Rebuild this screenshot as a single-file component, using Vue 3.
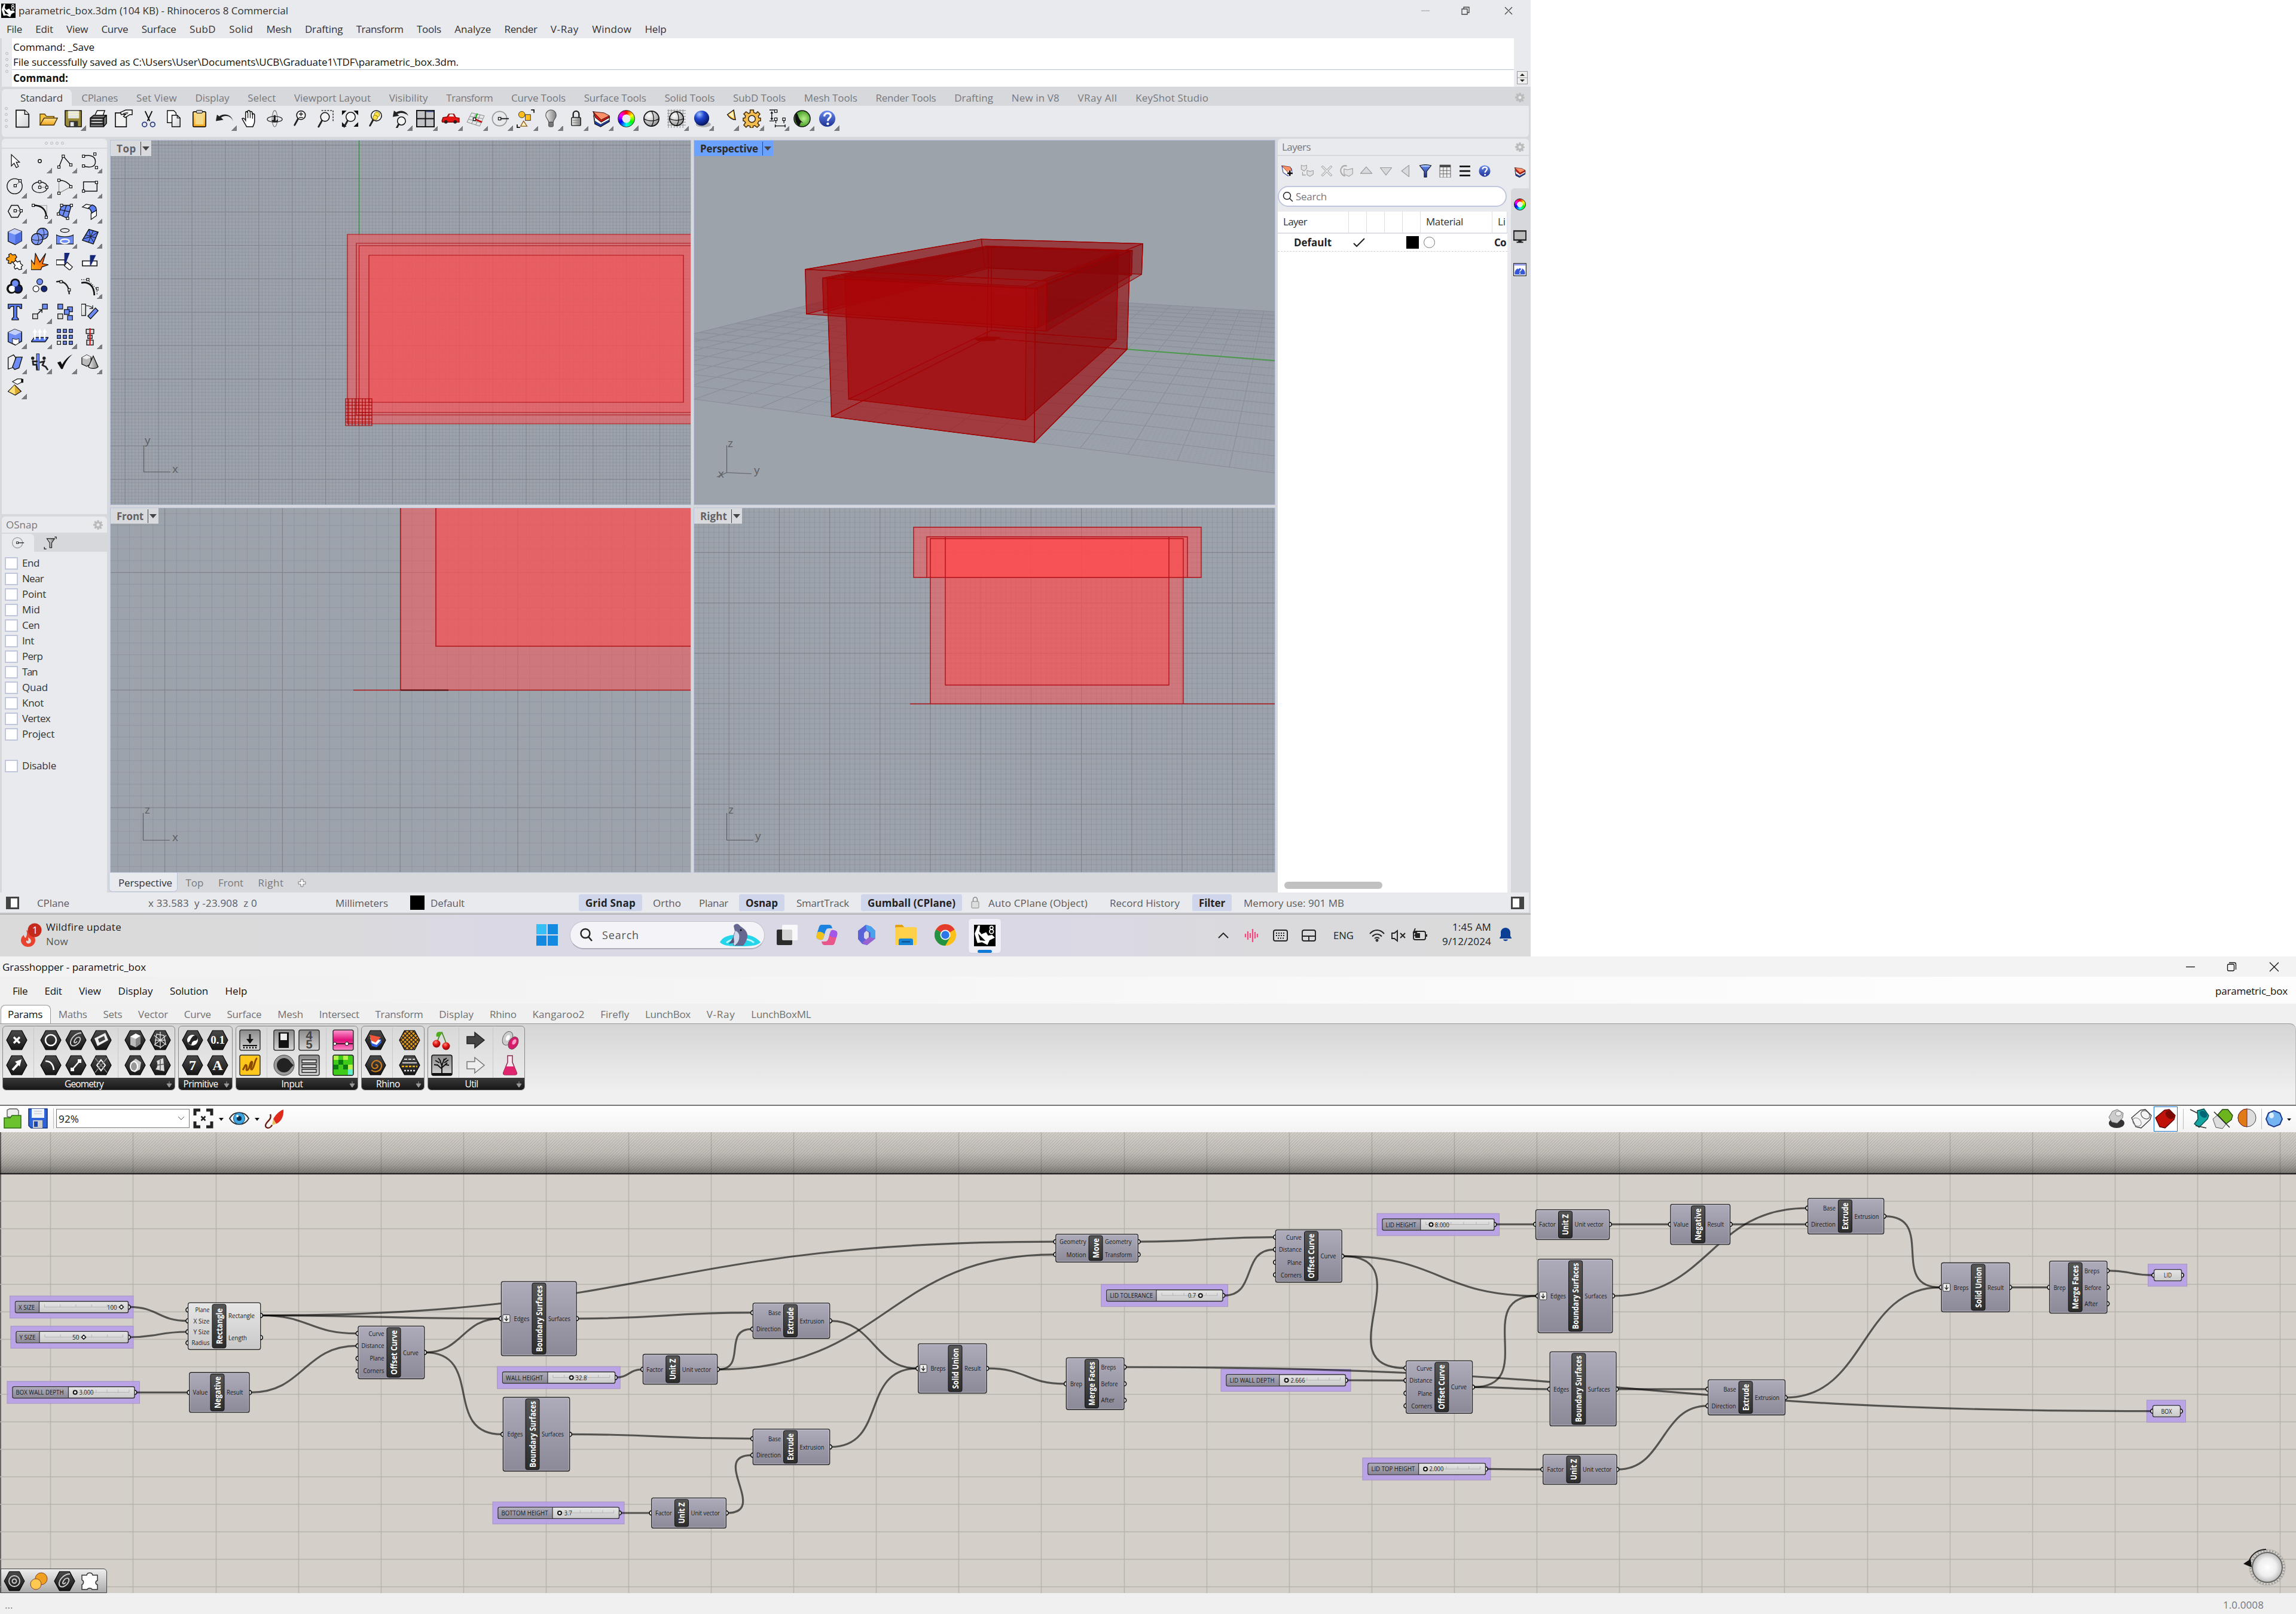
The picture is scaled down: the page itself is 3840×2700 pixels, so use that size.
<script setup>
const vFit = {
  mounted(el, { value }) {
    const n = el.textContent.length
    const w = el.getBoundingClientRect().width
    el.style.letterSpacing = (value - w) / n + 'px'
  },
}

const rhinoMenu = [['File', 26], ['Edit', 29.5], ['View', 36], ['Curve', 45], ['Surface', 58], ['SubD', 44], ['Solid', 40], ['Mesh', 42], ['Drafting', 63.5], ['Transform', 79], ['Tools', 41], ['Analyze', 61], ['Render', 55], ['V-Ray', 47], ['Window', 66], ['Help', 36]]
const rhinoTabs = [['CPlanes', 61], ['Set View', 68], ['Display', 57], ['Select', 47], ['Viewport Layout', 128], ['Visibility', 65], ['Transform', 78], ['Curve Tools', 91], ['Surface Tools', 104], ['Solid Tools', 84], ['SubD Tools', 88], ['Mesh Tools', 89], ['Render Tools', 101], ['Drafting', 65], ['New in V8', 80], ['VRay All', 66], ['KeyShot Studio', 122]]
const ghMenu = [['File', 25], ['Edit', 29], ['View', 37], ['Display', 58], ['Solution', 64], ['Help', 37]]
const ghTabs = [['Maths', 48], ['Sets', 32], ['Vector', 50], ['Curve', 45], ['Surface', 58], ['Mesh', 43], ['Intersect', 67], ['Transform', 80], ['Display', 58], ['Rhino', 45], ['Kangaroo2', 87], ['Firefly', 48], ['LunchBox', 76], ['V-Ray', 48], ['LunchBoxML', 100]]
const snaps = [['End', 29], ['Near', 36], ['Point', 40], ['Mid', 30], ['Cen', 29], ['Int', 20], ['Perp', 34], ['Tan', 25], ['Quad', 43], ['Knot', 36], ['Vertex', 47], ['Project', 54]]

const sq = (x, y, f = '#fff') => `<rect x="${x - 2.2}" y="${y - 2.2}" width="4.4" height="4.4" fill="${f}" stroke="#111" stroke-width="1.3"/>`
const lens = (x, y, r = 7.5) => `<path d="M${x - 5} ${y + 6}L${x - 11} ${y + 17}" stroke="#222" stroke-width="3" stroke-linecap="round"/><circle cx="${x}" cy="${y}" r="${r}" fill="#f4f4f4" stroke="#111" stroke-width="1.6"/>`
const ic = {
  newdoc: '<path d="M3 1.5h15l7 7v22H3z" fill="url(#gWhite)" stroke="#111" stroke-width="1.8"/><path d="M18 1.5v7h7" fill="#fff" stroke="#111" stroke-width="1.5"/>',
  open: '<path d="M1 27V8h8l3 4h13v5" fill="#f6c343" stroke="#5b4310" stroke-width="1.5"/><path d="M1 27l7-12h23l-6 12z" fill="url(#gGold)" stroke="#4a3508" stroke-width="1.5"/>',
  save: '<path d="M1 2h28v28H4l-3-3z" fill="#9a8b3c" stroke="#111" stroke-width="1.6"/><rect x="6" y="2.5" width="19" height="13" fill="#e4e4e0"/><path d="M6 5h19M6 9h19" stroke="#f4f4c8" stroke-width="1.5"/><rect x="8" y="20" width="15" height="10" fill="#333"/><rect x="10" y="22" width="6" height="7" fill="#e8e8e8"/>',
  print: '<path d="M8 12L13 2h13l-4 11" fill="#fff" stroke="#111" stroke-width="1.5"/><path d="M1 15l6-5h22v14l-5 6H1z" fill="#777" stroke="#111" stroke-width="1.6"/><path d="M1 15h23v15M24 15l5-5M1 20h23M1 25h23" fill="none" stroke="#111" stroke-width="2"/><path d="M4 17.500h17M4 22.500h17" stroke="#ddd" stroke-width="1.5"/>',
  props: '<path d="M1 6h19v24H1z" fill="#f2f2f2" stroke="#111" stroke-width="1.700"/><path d="M10 5l9-4h11v8h-4l-8 5-3-2 4-4-8 1z" fill="#fff" stroke="#111" stroke-width="1.500"/><path d="M14 7l9-2M15 9l8-2" stroke="#111"/>',
  cut: '<path d="M9 3l8 17M21 3l-8 17" stroke="#111" stroke-width="2"/><circle cx="8" cy="26" r="4" fill="none" stroke="#2e3c86" stroke-width="1.800"/><circle cx="22" cy="26" r="4" fill="none" stroke="#2e3c86" stroke-width="1.800"/>',
  copy: '<path d="M4 2h11l4 4v17H4z" fill="#fff" stroke="#111" stroke-width="1.500"/><path d="M12 10h9l5 5v15H12z" fill="url(#gWhite)" stroke="#111" stroke-width="1.500"/><path d="M21 10v5h5" fill="none" stroke="#111" stroke-width="1.200"/>',
  paste: '<rect x="5" y="4" width="22" height="26" rx="2" fill="url(#gGold)" stroke="#111" stroke-width="1.700"/><rect x="9" y="8" width="14" height="18" fill="#f3d98c"/><rect x="11" y="1.500" width="10" height="5" rx="1" fill="#ccc" stroke="#111"/>',
  undo: '<path d="M31 22C29 11 17 9 10 14l4 4L1 20 3 9l4 3C15 6 29 8 31 22z" fill="#222"/>',
  hand: '<path d="M11 30C8 25 5 20 3 16c2-2 4 0 6 3V6c0-3 3-3 3.500 0V4c0-3 4-3 4 0v1c0-2 4-2 4 1v3c0-2 4-2 4 1v11c0 4-2 6-3 9z" fill="#fff" stroke="#111" stroke-width="1.600"/><path d="M13 6v9M17 5v10M21 8v8" stroke="#111" stroke-width="1.300"/>',
  rotate: '<ellipse cx="16" cy="16" rx="4.500" ry="14" fill="none" stroke="#777" stroke-width="1.200"/><ellipse cx="16" cy="17" rx="13" ry="5" fill="none" stroke="#333" stroke-width="1.400"/><path d="M14 10h3.500v10l4-3v5H13l-3-3 4-1z" fill="#222"/>',
  zoom: lens(18, 10) + '<path d="M14.500 8h7M18 4.500v7M14.500 14h7" stroke="#111" stroke-width="1.300"/>',
  zoomwin: '<path d="M10 2h20v20" fill="none" stroke="#111" stroke-dasharray="3 2" stroke-width="1.400"/>' + lens(16, 13),
  zoomext: '<path d="M2 2h8l-8 8zM30 2h-8l8 8zM2 30h8l-8-8zM30 30h-8l8-8z" fill="#111"/>' + lens(17, 13, 8),
  zoomsel: lens(18, 11, 9) + '<circle cx="19" cy="9" r="4.500" fill="#ffe14a" stroke="#8a7400"/><circle cx="16" cy="14" r="4" fill="#ffe14a" stroke="#8a7400"/>',
  undoview: lens(18, 20, 7) + '<path d="M30 11C26 1 14 1 9 5L5 2 3 13l11-2-3-3c6-3 13-2 19 3z" fill="#222"/>',
  fourview: '<rect x="1" y="2" width="30" height="28" fill="#c2c3c6" stroke="#111" stroke-width="2"/><path d="M16 2v28M1 16h30" stroke="#111" stroke-width="2"/><path d="M17 3.500h13" stroke="#2a3c70" stroke-width="2"/>',
  car: '<path d="M1 20l2-6 7-1 3-5h9l3 6 6 1v7H2z" fill="#e51616" stroke="#700" stroke-width="1.200"/><path d="M13 12l2-3.500h5l2 4z" fill="#dff"/><circle cx="8" cy="21.500" r="3" fill="#222"/><circle cx="24" cy="21.500" r="3" fill="#222"/>',
  cplane: '<path d="M9 6l22 5-8 18L1 22zM6 12l22 4M4 17l21 6M16 8L9 25M24 9l-8 18" fill="#e6e7ea" stroke="#888" stroke-width="1"/><path d="M15 17l12 5" stroke="#c00" stroke-width="2.500"/><path d="M15 17l4-10" stroke="#0a0" stroke-width="2"/>' + sq(14, 17),
  osnap: '<circle cx="14" cy="16" r="12.500" fill="none" stroke="#999" stroke-width="1.800"/><path d="M14 16h16" stroke="#111" stroke-width="1.800"/>' + sq(14, 16),
  shapes: '<circle cx="9" cy="9" r="5.500" fill="#ffbe1e" stroke="#333"/><rect x="15" y="9" width="9" height="10" fill="#ffbe1e" stroke="#333"/><path d="M12 20l6 9H7z" fill="#fff0c8" stroke="#8a5a10" stroke-width="1.300"/><path d="M25 1h5v5M1 26v5h5" fill="none" stroke="#111" stroke-width="1.800"/>',
  lamp: '<path d="M12 22c0-5-5-6-5-12a9 9 0 0 1 18 0c0 6-5 7-5 12z" fill="url(#gGrey)" stroke="#555" stroke-width="1.300"/><rect x="12" y="22" width="8" height="8" rx="2" fill="#777" stroke="#444"/>',
  lock: '<path d="M11 15V8a5 5 0 0 1 10 0v7" fill="none" stroke="#222" stroke-width="2.400"/><rect x="8" y="14" width="16" height="14" rx="2" fill="url(#gGrey)" stroke="#222" stroke-width="1.500"/><path d="M10 19h12M10 23h12" stroke="#888"/>',
  layers: '<path d="M3 11l2 14 10 5 15-9v-8z" fill="#1e3fb0" stroke="#111" stroke-width="1.300"/><path d="M3 8l2 12 10 6 15-8v-6z" fill="#fff" stroke="#334" stroke-width="1"/><path d="M2 4l4 10 10 8 14-8v-3z" fill="#d01a10" stroke="#311" stroke-width="1.100"/><path d="M2 4l19 2 9 5-14 7z" fill="#ff8f66" stroke="#411" stroke-width="1"/>',
  sphere: '<circle cx="16" cy="16" r="13" fill="url(#gSphere)" stroke="#111" stroke-width="1.800"/><path d="M16 3c5 7 5 19 0 26M3 16c7 5 19 5 26 0" fill="none" stroke="#111" stroke-width="1.300"/>',
  spheregrid: '<path d="M2 0v32M7 0v32M12 0v32M17 0v32M22 0v32M27 0v32M0 2h32M0 7h32M0 12h32M0 17h32M0 22h32M0 27h32" stroke="#888" stroke-width="1"/><circle cx="16" cy="16" r="12" fill="url(#gSphere)" stroke="#111" stroke-width="1.800"/><path d="M16 4c5 7 5 17 0 24M4 16c7 4 17 4 24 0" fill="none" stroke="#111" stroke-width="1.300"/>',
  bluesphere: '<ellipse cx="19" cy="26" rx="13" ry="5" fill="#777" opacity=".5"/><circle cx="16" cy="15" r="13" fill="url(#gBlueBall)"/>',
  spot: '<path d="M17 9L28 1l3 17c-5 0-11-4-14-9z" fill="#ffb020" stroke="#111" stroke-width="1.400"/><path d="M27 3l1 13-9-7z" fill="#fff2c0"/>',
  gear: '<path d="M13 1h6v4l4 2 3-3 4 4-3 4 1 3h3v5h-3l-2 4 3 3-4 4-4-3-3 1v3h-5v-3l-4-1-3 3-4-4 3-4-2-3H1v-5h3l1-4-3-3 4-4 4 3 3-1z" fill="#f4bd52" stroke="#3a2503" stroke-width="1.500"/><circle cx="16" cy="16.500" r="6" fill="#e9eaee" stroke="#3a2503" stroke-width="1.500"/>',
  dim: '<path d="M7 5v12M3 1h8M3 20h8M13 26v5M30 26v5M13 28.500h17" stroke="#111" stroke-width="1.500"/><path d="M4.500 7L7 3l2.500 4M4.500 15L7 19l2.500-4" fill="#111"/><path d="M14 18v6M28 18v6" stroke="#111" stroke-width="1.400" fill="none"/>' + sq(14, 3) + sq(14, 17) + sq(28, 17),
  green: '<circle cx="16" cy="16" r="14" fill="url(#gGreenBall)" stroke="#111" stroke-width="1.500"/><path d="M6 6C2 14 4 24 11 29l3-7 4 1C9 18 10 9 6 6z" fill="#111"/>',
  help: '<circle cx="16" cy="16" r="14" fill="url(#gHelp)"/><path d="M11 12c0-7 11-7 11-1 0 4-5 4-5 9" fill="none" stroke="#fff" stroke-width="3.400"/><circle cx="17" cy="25" r="2.200" fill="#fff"/>',
  arrow: '<path d="M10 4v21l5-5 4 8 4-2-4-8h6z" fill="#fff" stroke="#111" stroke-width="1.400"/>',
  point: '<circle cx="16" cy="16" r="3" fill="#fff" stroke="#111" stroke-width="1.600"/>',
  poly: '<path d="M5 27L13 7l14 16" fill="none" stroke="#111" stroke-width="1.600"/>' + sq(5, 27) + sq(13, 7) + sq(27, 23),
  curve: '<path d="M4 7c8-3 22-2 22 10S12 28 4 25" fill="none" stroke="#111" stroke-width="1.600"/>' + sq(4, 7) + sq(25, 3) + sq(4, 25) + sq(28, 28),
  circle: '<circle cx="16" cy="16" r="14" fill="none" stroke="#111" stroke-width="1.500"/><path d="M17 15l9-8" stroke="#777" stroke-width="1.300"/>' + sq(17, 15) + sq(26, 6),
  ellipse: '<ellipse cx="16" cy="18" rx="14" ry="10" fill="none" stroke="#111" stroke-width="1.500"/><path d="M16 18V8M16 18h13" stroke="#777"/>' + sq(16, 18) + sq(16, 8) + sq(29, 18),
  arc: '<path d="M5 5c11 0 19 6 22 12L5 29z" fill="none" stroke="#888" stroke-width="1.200"/><path d="M5 5c11 0 19 6 22 12" fill="none" stroke="#111" stroke-width="1.600"/>' + sq(5, 5) + sq(27, 17) + sq(5, 29),
  rect: '<path d="M4 8h25v17H4z" fill="none" stroke="#111" stroke-width="1.600"/>' + sq(4, 25) + sq(28, 9),
  hex: '<path d="M10 5h12l6 11-6 11H10L4 16z" fill="none" stroke="#111" stroke-width="1.600"/><path d="M17 15h11" stroke="#777"/>' + sq(17, 15) + sq(28, 15),
  fillet: '<path d="M4 5h25v22" fill="none" stroke="#aaa" stroke-width="1.400"/><path d="M4 5c15 0 24 6 24 22" fill="none" stroke="#111" stroke-width="2.600"/>' + sq(4, 5) + sq(28, 27),
  srf: '<path d="M10 5h18l-7 24L4 21z" fill="#6d8cf5" stroke="#111" stroke-width="1.500"/><path d="M19 5l-7 20M7 13l18 4" stroke="#111" stroke-width="1.300"/>' + sq(10, 5) + sq(28, 5) + sq(4, 21) + sq(21, 29),
  bend: '<path d="M2 8l7-5 11 2-7 6z" fill="#fff" stroke="#111" stroke-width="1.400"/><path d="M13 10l7-6c6 2 8 6 8 10l-9 7c0-5-2-9-6-11z" fill="#5b7df2" stroke="#111" stroke-width="1.400"/><path d="M18 20l10-6v10l-10 7z" fill="#fff" stroke="#111" stroke-width="1.400"/>',
  box: '<path d="M4 8l12-6 13 5v17l-12 7-13-6z" fill="#6d8cf5" stroke="#111" stroke-width="1.600"/><path d="M4 8l12-6 13 5-12 6z" fill="#c3d0fb"/><path d="M17 13l12-6v17l-12 7z" fill="#4f70e4"/>',
  spheres: '<circle cx="21" cy="11" r="10.500" fill="#7f9af8" stroke="#111" stroke-width="1.500"/><path d="M21 1c4 6 4 14 0 20M11 11c6 3 14 3 20 0" stroke="#111" fill="none"/><circle cx="11" cy="21" r="10.500" fill="#7f9af8" stroke="#111" stroke-width="1.500"/><path d="M11 11c4 6 4 14 0 20M1 21c6 3 14 3 20 0" stroke="#111" fill="none"/>',
  ring: '<ellipse cx="16" cy="5" rx="8" ry="3.500" fill="none" stroke="#111" stroke-width="1.400"/><path d="M0 13c9 5 23 5 32 0v17H0z" fill="#6d8cf5" stroke="#111" stroke-width="1.500"/><ellipse cx="16" cy="25" rx="8" ry="4" fill="none" stroke="#fff" stroke-width="2.500"/>',
  mesh: '<path d="M14 3l17 5-9 22-20-7z" fill="#5b7df2" stroke="#111" stroke-width="1.600"/><path d="M8 13l19 6M22 5l-9 22M14 3l3 14 14-9M5 20l12-3 6 10" stroke="#111" stroke-width="1.100" fill="none"/>',
  puzzle: '<path d="M1 10l5-3-1-4 4-2 3 3 5-1 3 5-3 3 2 6-5 2-3-3-2 4-5-1 1-5-4-1z" fill="#ff9d0a" stroke="#111" stroke-width="1.400"/><path d="M13 18l5-4 3 3 5-2 1 5 4 3-3 3 1 4-5 1-3-3-4 2-2-4 2-3z" fill="#fff" stroke="#111" stroke-width="1.400"/>',
  burst: '<path d="M0 31V13l6 8L8 1l8 16L27 1l-6 19 11 2-12 4-2 5z" fill="url(#gFire)" stroke="#111" stroke-width="1.400"/>',
  trim: '<path d="M0 13h16v9H0z" fill="#fff" stroke="#111" stroke-width="1.600"/><path d="M20 17l10 9-5 6-10-8z" fill="#fff" stroke="#111" stroke-width="1.400"/><path d="M15 0h10l-8 21-2-2z" fill="#152778"/>',
  split: '<path d="M2 15h27v9H2z" fill="#fff" stroke="#111" stroke-width="1.700"/><path d="M16 4h11l-9 19h-2z" fill="#152778"/>',
  bool1: '<circle cx="17" cy="10" r="9" fill="#111"/><circle cx="10" cy="20" r="9" fill="#111"/><circle cx="22" cy="20" r="9" fill="#111"/><circle cx="11" cy="20" r="6" fill="#fff"/><circle cx="22" cy="20" r="6" fill="#152778"/><circle cx="17" cy="10" r="6" fill="#6d8cf5"/>',
  bool2: '<circle cx="16" cy="7" r="5.500" fill="#6d8cf5" stroke="#111" stroke-width="1.300"/><circle cx="9" cy="20" r="5.500" fill="#fff" stroke="#111" stroke-width="1.300"/><circle cx="24" cy="20" r="5.500" fill="#152778" stroke="#111" stroke-width="1.300"/>',
  edit: '<path d="M0 7c14-3 24 6 24 23" fill="none" stroke="#222" stroke-width="2.600"/>' + sq(9, 7) + sq(24, 22),
  edit2: '<path d="M0 9c14-3 24 6 24 23" fill="none" stroke="#111" stroke-width="3"/><path d="M0 3h11l18 18v10" fill="none" stroke="#111" stroke-width="1.500" stroke-dasharray="1.500 2.500"/>' + sq(12, 3) + sq(30, 20),
  text: '<path d="M4 2h25v8h-3c0-3-2-4-6-4v20l3 3v2H11v-2l3-3V6c-5 0-7 1-7 4H4z" fill="#5b7df2" stroke="#111" stroke-width="1.500"/>',
  move: '<rect x="3" y="20" width="9" height="9" fill="#ddd" stroke="#111" stroke-width="1.400"/><rect x="21" y="2" width="9" height="9" fill="#6d8cf5" stroke="#111" stroke-width="1.400"/><path d="M12 20l8-8M14 12h6v6" fill="none" stroke="#111" stroke-width="1.600"/>',
  copies: '<rect x="3" y="2" width="9" height="9" fill="#6d8cf5" stroke="#111" stroke-width="1.400"/><rect x="3" y="20" width="9" height="9" fill="#ddd" stroke="#111" stroke-width="1.400"/><rect x="21" y="7" width="9" height="9" fill="#6d8cf5" stroke="#111" stroke-width="1.400"/><rect x="15" y="12" width="9" height="9" fill="#6d8cf5" stroke="#111" stroke-width="1.400"/><rect x="21" y="23" width="9" height="9" fill="#6d8cf5" stroke="#111" stroke-width="1.400"/>',
  rot2: '<rect x="0" y="2" width="8" height="21" fill="url(#gWhite)" stroke="#111" stroke-width="1.500"/><path d="M26 9l5 5-14 15-5-5z" fill="#6d8cf5" stroke="#111" stroke-width="1.500"/><path d="M9 5c6 0 10 1 12 5m0-6v6h-6" fill="none" stroke="#111" stroke-width="1.300"/>',
  box2: '<path d="M4 8l12-6 13 5v17l-12 7-13-6z" fill="#6d8cf5" stroke="#111" stroke-width="1.600"/><path d="M4 8l12-6 13 5-12 6z" fill="#c3d0fb"/><path d="M12 19l7 2 5-2v8l-6 4-6-3z" fill="#fff" stroke="#111"/>',
  project: '<path d="M6 17h26l-6 8H0z" fill="#5b7df2" stroke="#111" stroke-width="1.600"/><path d="M7 21V6M16 21V6M25 21V6" stroke="#fff" stroke-width="3"/><path d="M3 8l4-7 4 7zM12 8l4-7 4 7zM21 8l4-7 4 7z" fill="#fff"/>',
  array: [2, 13, 24].map(y => [2, 13, 24].map(x => `<rect x="${x}" y="${y}" width="6" height="6" fill="${x === 2 && y === 24 ? '#fff' : '#6d8cf5'}" stroke="#111" stroke-width="1.400"/>`).join('')).join(''),
  align: '<rect x="9" y="2" width="14" height="8" fill="#ddd" stroke="#111" stroke-width="1.500"/><rect x="12" y="13" width="8" height="6" fill="#ddd" stroke="#111" stroke-width="1.500"/><rect x="10" y="22" width="12" height="9" fill="#ddd" stroke="#111" stroke-width="1.500"/><path d="M16 0v32" stroke="#d3141c" stroke-width="2.400"/>',
  folds: '<path d="M4 8l10-5 4 5-4 18-10 3z" fill="#eee" stroke="#111" stroke-width="1.500"/><path d="M19 7l11 0-6 20-8 3-4-5z" fill="#6d8cf5" stroke="#111" stroke-width="1.500"/>',
  people: '<circle cx="3" cy="9" r="3" fill="#222"/><circle cx="24" cy="9" r="3" fill="#222"/><rect x="10" y="1" width="5" height="30" fill="#6d8cf5" stroke="#111"/><path d="M3 13l1 8 6 0 1 10M4 15h8M25 13l-4 9 6 3 4 6M24 15l-8 2" stroke="#222" stroke-width="3" fill="none"/>',
  check: '<path d="M2 17l6-2 3 6C16 12 22 6 30 2 21 10 16 19 12 29H9z" fill="#111"/>',
  solids: '<path d="M1 8l9-5 8 4v12l-8 5-9-4z" fill="#bbb" stroke="#111" stroke-width="1.400"/><path d="M1 8l9-5 8 4-8 4z" fill="#eee"/><path d="M22 5l9 20c-4 4-14 4-18 0z" fill="url(#gGrey)" stroke="#111" stroke-width="1.400"/>',
  pyramid: '<path d="M12 6l9-5h8v6l-8 4z" fill="#fff" stroke="#111" stroke-width="1.200"/><path d="M28 1h5v7h-5z" fill="#111"/><path d="M16 12l12 12-11 7-13-7z" fill="#d9a92c" stroke="#111" stroke-width="1.400"/><path d="M16 12L5 24l12 6z" fill="#ffdf7a"/>',
  layeradd: '<path d="M3 5l3 15 12 8 10-8-2-10z" fill="#fff" stroke="#23409c" stroke-width="1.500"/><path d="M2 3l21 3 4 8-10 5z" fill="#ff8f66" stroke="#411"/><path d="M22 15v13M16 21.500h13" stroke="#fff" stroke-width="7"/><path d="M22 15v13M16 21.500h13" stroke="#111" stroke-width="4"/>',
  sublayer: '<path d="M2 2l6 2 7-2v8l-6 6-7-4zM16 15l7 2 8-2v9l-8 5-7-4zM5 18v8h8" fill="#e2e2e4" stroke="#999" stroke-width="1.500"/>',
  del: '<path d="M3 6l3-3 10 10L26 3l3 3-10 10 10 10-3 3-10-10L6 29l-3-3 10-10z" fill="#e2e2e4" stroke="#999" stroke-width="1.400"/>',
  redolayer: '<path d="M17 4C6 0-1 12 3 20c2 5 6 8 10 8" fill="none" stroke="#aaa" stroke-width="3"/><path d="M10 11l8 2 13-3v13l-9 6-12-5z" fill="#e2e2e4" stroke="#999" stroke-width="1.500"/>',
  up: '<path d="M16 6l14 16H2z" fill="#d9dadd" stroke="#999" stroke-width="1.700" stroke-linejoin="round"/>',
  down: '<path d="M16 26L30 8H2z" fill="#d9dadd" stroke="#999" stroke-width="1.700" stroke-linejoin="round"/>',
  left: '<path d="M6 16L24 2v28z" fill="#d9dadd" stroke="#999" stroke-width="1.700" stroke-linejoin="round"/>',
  funnel: '<path d="M2 3c8-3 20-3 28 0L19 17v14h-6V17z" fill="url(#gHelp)" stroke="#111" stroke-width="1.500"/><ellipse cx="16" cy="4" rx="12" ry="2" fill="#a9c4ff"/>',
  table: '<rect x="3" y="2" width="26" height="30" fill="#eee" stroke="#666" stroke-width="1.500"/><rect x="3" y="1" width="26" height="6" fill="#444"/><path d="M3 15h26M3 23h26M11.500 7v25M20 7v25" stroke="#666" stroke-width="1.400"/>',
  burger: '<path d="M3 5h26M3 16h26M3 27h26" stroke="#111" stroke-width="4"/>',
  cog: '<path d="M13 2h6v4l3 2 3-3 4 4-3 3 1 2h3v5h-4l-1 3 3 3-4 4-3-3-2 1v3h-6v-4l-2-1-3 3-4-4 3-3-1-2H2v-6h4l1-2-3-3 4-4 3 3 2-1z" fill="#bbb"/><circle cx="16" cy="16" r="4.500" fill="#e9eaee"/>',
  monitor: '<rect x="1" y="2" width="30" height="22" fill="#bbb" stroke="#222" stroke-width="3.500"/><path d="M12 24h8v4h4v3H8v-3h4z" fill="#222"/>',
  helpwin: '<rect x="1" y="1" width="30" height="30" fill="#fff" stroke="#000" stroke-width="1.500"/><rect x="2" y="2" width="28" height="4" fill="#8f93e6"/><path d="M4 28a12.500 12.500 0 1 1 24 0z" fill="#3556d6"/><path d="M12 15c0-5 8-5 8 0 0 3-4 3-4 6" fill="none" stroke="#fff" stroke-width="2.500"/><circle cx="16" cy="25" r="1.600" fill="#fff"/>',
  filter2: '<path d="M7 6h19l-7 10v12h-5V16z" fill="url(#gGrey)" stroke="#111" stroke-width="1.500"/><path d="M26 2h4v5M1 26v5h5" fill="none" stroke="#111" stroke-width="1.700"/>',
  rhino: '<rect width="32" height="32" fill="#000"/><path d="M1 13L6 1h3l-1 9 3 4 7-3 3 5 6-1 4 4-8 4-3 7-8-4-7 1z" fill="#fff"/><path d="M6 13l3 10 8 1-4-4z" fill="#000"/><circle cx="26" cy="4.500" r="2.400" fill="none" stroke="#fff" stroke-width="1.500"/><circle cx="26" cy="10" r="3" fill="none" stroke="#fff" stroke-width="1.500"/>',
}
const toolbar = ['newdoc', 'open', 'save', 'print', 'props', 'cut', 'copy', 'paste', 'undo', 'hand', 'rotate', 'zoom', 'zoomwin', 'zoomext', 'zoomsel', 'undoview', 'fourview', 'car', 'cplane', 'osnap', 'shapes', 'lamp', 'lock', 'layers', 'wheel', 'sphere', 'spheregrid', 'bluesphere', 'spot', 'gear', 'dim', 'green', 'help']
const flyout = i => i === 2 || i === 8 || (i >= 15 && i !== 25)
const palette = ['arrow', 'point', 'poly', 'curve', 'circle', 'ellipse', 'arc', 'rect', 'hex', 'fillet', 'srf', 'bend', 'box', 'spheres', 'ring', 'mesh', 'puzzle', 'burst', 'trim', 'split', 'bool1', 'bool2', 'edit', 'edit2', 'text', 'move', 'copies', 'rot2', 'box2', 'project', 'array', 'align', 'folds', 'people', 'check', 'solids', 'pyramid']
const noFly = [0, 17, 18, 19, 21, 22, 24, 26, 27]
const layerTools = ['layeradd', 'sublayer', 'del', 'redolayer', 'up', 'down', 'left', 'funnel', 'table', 'burger', 'help']

function gridLines(o, s, a, b) {
  const minor = [], major = []
  for (let i = Math.ceil((a - o) / s); o + i * s < b; i++) (i % 10 ? minor : major).push(o + i * s)
  return { minor, major }
}
function gridPath(ox, oy, s, x0, y0, x1, y1) {
  const gx = gridLines(ox, s, x0, x1), gy = gridLines(oy, s, y0, y1)
  const p = k => gx[k].map(x => `M${x.toFixed(1)} ${y0}V${y1}`).join('') + gy[k].map(y => `M${x0} ${y.toFixed(1)}H${x1}`).join('')
  return { minor: p('minor'), major: p('major') }
}
const gTop = gridPath(600.5, 690, 5.59, 185, 235, 1155, 844)
const gFront = gridPath(669.200, 1154.400, 19.680, 185, 850, 1155, 1459)
const gRight = gridPath(1556, 1177, 8.420, 1161, 850, 2132, 1459)

/* ground plane of the perspective view: plane millimetres -> picture */
function homography(src, dst) {
  const A = []
  src.forEach(([x, y], i) => {
    const [u, v] = dst[i]
    A.push([x, y, 1, 0, 0, 0, -u * x, -u * y, u])
    A.push([0, 0, 0, x, y, 1, -v * x, -v * y, v])
  })
  for (let c = 0; c < 8; c++) {
    let p = c
    for (let r = c; r < 8; r++) if (Math.abs(A[r][c]) > Math.abs(A[p][c])) p = r
    ;[A[c], A[p]] = [A[p], A[c]]
    for (let r = 0; r < 8; r++) if (r !== c) {
      const f = A[r][c] / A[c][c]
      for (let k = c; k < 9; k++) A[r][k] -= f * A[c][k]
    }
  }
  const h = A.map((r, i) => r[8] / r[i])
  return (x, y) => {
    const w = h[6] * x + h[7] * y + 1
    return [((h[0] * x + h[1] * y + h[2]) / w).toFixed(1), ((h[3] * x + h[4] * y + h[5]) / w).toFixed(1)]
  }
}
const H = homography([[0, 0], [0, 50], [100, 50], [100, 0]], [[785, 848], [1160, 896], [912, 1290], [369, 1181]])
const seg = (a, b) => `M${H(...a).join(' ')}L${H(...b).join(' ')}`
let pMajor = '', pMinor = ''
for (let i = -100; i <= 100; i++) {
  const s = seg([i, -100], [i, 100]) + seg([-100, i], [100, i])
  if (i % 10) pMinor += s
  else pMajor += s
}

const faces = [
  ['770,430 1202,449 1199,579 779,550', 'd'], ['299,558 770,430 779,550 302,747', 'd'],
  ['785,459 1174,478 1172,582 790,553', 'd'], ['345,595 785,459 790,553 348,741', 'd'],
  ['790,462 1168,480 1160,896 785,848', 'd'], ['357,597 790,462 785,848 369,1181', 'm'],
  ['797,465 1137,480 1131,855 797,816', 'd'], ['405,588 797,465 797,816 415,1107', 'm'],
  ['785,848 1160,896 912,1290 369,1181', 'm'], ['797,816 1131,855 888,1195 415,1107', 'd'],
  ['405,588 890,630 888,1195 415,1107', 'f'], ['890,630 1137,480 1131,855 888,1195', 'd'],
  ['357,597 914,638 912,1290 369,1181', 'f'], ['914,638 1168,480 1160,896 912,1290', 'm'],
  ['345,595 920,640 922,805 348,741', 'f'], ['920,640 1174,478 1172,582 922,805', 'd'],
  ['345,595 785,459 1174,478 920,640', 'd'],
  ['299,558 945,607 944,819 302,747', 'f'], ['945,607 1202,449 1199,579 944,819', 'd'],
  ['299,558 770,430 1202,449 945,607', 'm'],
]

/* definition canvas */
const W = { Plane: 24, 'X Size': 27, 'Y Size': 27, Radius: 30, Rectangle: 44, Length: 31, Value: 25, Result: 27.5, Curve: 26, Distance: 38, Corners: 35, Edges: 26, Surfaces: 37, Factor: 28, 'Unit vector': 48.5, Geometry: 44.5, Motion: 33, Transform: 45, Base: 21, Direction: 41, Extrusion: 41, Breps: 25, Brep: 20, Before: 28, After: 22.5 }
const TW = { Rectangle: 60, Negative: 53.5, 'Offset Curve': 74.6, 'Boundary Surfaces': 111, 'Unit Z': 35, Extrude: 45, Move: 33, 'Solid Union': 68, 'Merge Faces': 73 }
const node = (title, x, x2, y, y2, bar, ins, outs, opt = {}) => ({ title, x, y, w: x2 - x, h: y2 - y, bar, ins, outs, ...opt })
const nodes = [
  node('Rectangle', 314.6, 435.7, 2179.4, 2257.5, 355, [['Plane', 2191.3], ['X Size', 2209.6], ['Y Size', 2228], ['Radius', 2246.4]], [['Rectangle', 2200.5], ['Length', 2237.6]], { light: true }),
  node('Negative', 316.8, 417, 2296, 2362.7, 352, [['Value', 2329.4]], [['Result', 2329.4]]),
  node('Offset Curve', 599, 709.7, 2218.4, 2306.5, 647, [['Curve', 2230.7], ['Distance', 2251.4], ['Plane', 2272.4], ['Corners', 2293.4]], [['Curve', 2262.5]]),
  node('Boundary Surfaces', 838.4, 964, 2143.8, 2267.8, 890, [['Edges', 2205.8]], [['Surfaces', 2205.8]], { flat: true }),
  node('Boundary Surfaces', 841.4, 952.7, 2337.5, 2461, 879, [['Edges', 2399.4]], [['Surfaces', 2399.4]]),
  node('Unit Z', 1075.4, 1199.6, 2265.5, 2315.6, 1113.8, [['Factor', 2290.8]], [['Unit vector', 2290.8]]),
  node('Unit Z', 1089.7, 1214.4, 2505.8, 2556.3, 1128.5, [['Factor', 2531]], [['Unit vector', 2531]]),
  node('Move', 1765.8, 1903.3, 2064.6, 2111.3, 1821, [['Geometry', 2077.2], ['Motion', 2098.7]], [['Geometry', 2077.2], ['Transform', 2098.7]]),
  node('Extrude', 1259.3, 1387.7, 2179.8, 2239, 1310.5, [['Base', 2195.9], ['Direction', 2223.4]], [['Extrusion', 2209.6]]),
  node('Extrude', 1259.3, 1387.7, 2390.6, 2450.3, 1310.5, [['Base', 2406.7], ['Direction', 2434.3]], [['Extrusion', 2420.5]]),
  node('Solid Union', 1535.7, 1650, 2247.9, 2330.6, 1586, [['Breps', 2289.2]], [['Result', 2289.2]], { flat: true }),
  node('Merge Faces', 1783.3, 1880, 2271.3, 2358, 1814.5, [['Brep', 2314.9]], [['Breps', 2287], ['Before', 2314.9], ['After', 2342.4]]),
  node('Offset Curve', 2133.4, 2244.2, 2057.3, 2145, 2181.5, [['Curve', 2069.6], ['Distance', 2090.3], ['Plane', 2111.7], ['Corners', 2132.7]], [['Curve', 2101.4]]),
  node('Offset Curve', 2351.7, 2462.5, 2276.4, 2364.3, 2399.8, [['Curve', 2288.6], ['Distance', 2309.3], ['Plane', 2330.7], ['Corners', 2351.8]], [['Curve', 2320.4]]),
  node('Unit Z', 2568.5, 2691.6, 2023.6, 2073.6, 2606.5, [['Factor', 2048.2]], [['Unit vector', 2048.2]]),
  node('Negative', 2794, 2893.5, 2014.6, 2081.8, 2828.6, [['Value', 2048.2]], [['Result', 2048.2]]),
  node('Extrude', 3023.6, 3150.7, 2004.6, 2064.3, 3074.4, [['Base', 2021], ['Direction', 2048.2]], [['Extrusion', 2034.6]]),
  node('Boundary Surfaces', 2572.3, 2696.8, 2106.4, 2229.6, 2623.6, [['Edges', 2167.9]], [['Surfaces', 2167.9]], { flat: true }),
  node('Boundary Surfaces', 2592.2, 2703, 2261.4, 2385.4, 2628.8, [['Edges', 2323.9]], [['Surfaces', 2323.9]]),
  node('Extrude', 2856.8, 2985.5, 2308.2, 2367, 2908, [['Base', 2323.9], ['Direction', 2351.8]], [['Extrusion', 2337.9]]),
  node('Unit Z', 2580.7, 2704, 2433.2, 2483.2, 2620, [['Factor', 2458.2]], [['Unit vector', 2458.2]]),
  node('Solid Union', 3247, 3361, 2112.5, 2194.6, 3297, [['Breps', 2153.6]], [['Result', 2153.6]], { flat: true }),
  node('Merge Faces', 3427.9, 3524, 2109.6, 2196.8, 3459.3, [['Brep', 2153.6]], [['Breps', 2125.7], ['Before', 2153.6], ['After', 2181]]),
]
const slider = (label, x, x2, y, split, knob, value, vx, vw, opt = {}) => ({ label, x, y, w: x2 - x, split, knob, value, vx, vw, ...opt })
const sliders = [
  slider('X SIZE', 25.6, 214.5, 2177, 65.5, 203, '100', 179, 16.5, { lw: 27, dia: true }),
  slider('Y SIZE', 27, 214.5, 2227.4, 66, 140, '50', 121, 11.5, { lw: 27, dia: true }),
  slider('BOX WALL DEPTH', 21, 225, 2319.8, 114.4, 125.7, '3.000', 132.5, 24, { lw: 80 }),
  slider('WALL HEIGHT', 840.6, 1028.7, 2295, 915.9, 955.7, '32.8', 962.5, 19, { lw: 62 }),
  slider('BOTTOM HEIGHT', 833, 1035.5, 2521.4, 924, 936, '3.7', 943.7, 13, { lw: 78 }),
  slider('LID TOLERANCE', 1850.7, 2045, 2157.7, 1934, 2007.8, '0.7', 1987, 13, { lw: 72 }),
  slider('LID WALL DEPTH', 2051, 2250.5, 2299.5, 2139.7, 2151.6, '2.666', 2158.6, 24, { lw: 75 }),
  slider('LID HEIGHT', 2312, 2499, 2039, 2375.7, 2393.5, '8.000', 2399.8, 24, { lw: 51 }),
  slider('LID TOP HEIGHT', 2287.9, 2484.5, 2447.9, 2372.6, 2384, '2.000', 2390.4, 24, { lw: 73 }),
]
const params = [{ label: 'LID', x: 3602.6, y: 2123.7, w: 13 }, { label: 'BOX', x: 3600.5, y: 2351.2, w: 18 }]
const wires = [
  [216, 2186.4, 313, 2209.6], [216, 2237, 313, 2228], [227, 2329.4, 315, 2329.4],
  [437, 2200.5, 597, 2230.7], [437, 2200.5, 836, 2205.8], [437, 2200.5, 1764, 2077.2],
  [419, 2329.4, 597, 2251.4], [711, 2262.5, 836, 2205.8], [711, 2262.5, 839, 2399.4],
  [966, 2205.8, 1257, 2195.9], [954, 2399.4, 1257, 2406.7], [1030, 2304.4, 1074, 2290.8],
  [1037, 2531, 1088, 2531], [1201, 2290.8, 1257, 2223.4], [1201, 2290.8, 1764, 2098.7],
  [1216, 2531, 1257, 2434.3], [1389, 2209.6, 1534, 2289.2], [1389, 2420.5, 1534, 2289.2],
  [1652, 2289.2, 1781, 2314.9], [1882, 2287, 3598, 2360.7], [1905, 2077.2, 2131, 2069.6],
  [2047, 2167.2, 2131, 2090.3], [2252, 2309, 2350, 2309.3], [2246, 2101.4, 2570, 2167.9],
  [2246, 2101.4, 2350, 2288.6], [2464, 2320.4, 2570, 2167.9], [2464, 2320.4, 2590, 2323.9],
  [2501, 2048.2, 2567, 2048.2], [2693, 2048.2, 2792, 2048.2], [2895, 2048.2, 3022, 2048.2],
  [2698, 2167.9, 3022, 2021], [3152, 2034.6, 3245, 2153.6], [2705, 2323.9, 2855, 2323.9],
  [2486, 2457.4, 2579, 2458.2], [2706, 2458.2, 2855, 2351.8], [2987, 2337.9, 3245, 2153.6],
  [3363, 2153.6, 3426, 2153.6], [3526, 2125.7, 3601, 2133.2],
].map(([a, b, c, d]) => {
  const k = Math.max((c - a) / 2, Math.abs(d - b) * 0.73)
  return `M${a} ${b}C${a + k} ${b} ${c - k} ${d} ${c} ${d}`
})
const gv = Array.from({ length: 28 }, (_, i) => Math.round(84.3 + i * 138.1) + 0.5)
const ghh = Array.from({ length: 15 }, (_, i) => Math.round(2009.3 + i * 46.07) + 0.5)

const hexBase = '<path d="M1 18L9.500 2h17L35 18l-8.500 16h-17z" fill="url(#gHex)" stroke="#000" stroke-width="1.200"/>'
const tile = (f = 'url(#gTile)') => `<rect x="1" y="1" width="34" height="34" rx="3" fill="${f}" stroke="#333" stroke-width="1.500"/>`
const gi = {
  x: hexBase + '<path d="M13 13l10 10M23 13L13 23" stroke="#fff" stroke-width="3.500"/>',
  vec: hexBase + '<path d="M11 26l9-10" stroke="#fff" stroke-width="4"/><path d="M15 12l11-4-3 12z" fill="#fff"/>',
  circ: hexBase + '<circle cx="18" cy="18" r="9" fill="none" stroke="#fff" stroke-width="2.600"/>',
  arc: hexBase + '<path d="M9 11c9 0 13 6 14 15" fill="none" stroke="#fff" stroke-width="2.600"/>',
  spiral: hexBase + '<path d="M27 6C18 6 8 15 9 24c2 7 13 3 16-6 2-7-6-6-9 0-3 5 1 6 4 2" fill="none" stroke="#ccc" stroke-width="2"/>',
  line: hexBase + '<path d="M12 25L24 11" stroke="#fff" stroke-width="2.400"/><rect x="9" y="22" width="6" height="6" fill="#fff"/><rect x="21" y="8" width="6" height="6" fill="#fff"/>',
  plane: hexBase + '<path d="M7 15l18-9 5 12-18 10z" fill="#eee"/><path d="M13 16l10-5 2 6-10 5z" fill="#444"/>',
  diamond: hexBase + '<path d="M18 9l7 9-7 9-7-9z" fill="none" stroke="#fff" stroke-width="2"/><path d="M8 6l20 24M28 6L8 30" stroke="#888" stroke-width="1.500"/>',
  box: hexBase + '<path d="M10 12l9-5 8 4v13l-8 6-9-4z" fill="#bbb"/><path d="M10 12l9-5 8 4-8 5z" fill="#fff"/><path d="M19 16l8-5v13l-8 6z" fill="#888"/>',
  mesh: hexBase + '<path d="M18 4v28M8 10l20 16M28 10L8 26M9 18h18M12 8l12 2 3 14-8 6-10-4z" fill="none" stroke="#ddd" stroke-width="1.400"/>',
  cyl: hexBase + '<path d="M10 14l9-7 9 6-2 12-9 5z" fill="#ccc"/><ellipse cx="16" cy="20" rx="6" ry="8" fill="#999" stroke="#fff" stroke-width="2"/>',
  surf: hexBase + '<path d="M12 11l11-5 2 22-15-3c4-4 4-9 2-14z" fill="#ddd"/><path d="M18 9v17M12 18l13-2" stroke="#555" stroke-width="1.500"/>',
  bool: hexBase + '<circle cx="18" cy="18" r="9" fill="#fff"/><path d="M22 10a4.500 4.500 0 0 1 0 9c-3 0-5 2-6 7a9 9 0 0 1-6-4C15 22 14 12 22 10z" fill="#222"/>',
  num: hexBase, seven: hexBase, alpha: hexBase,
  press: tile() + '<path d="M18 8v9" stroke="#111" stroke-width="3"/><path d="M12 16h12l-6 8zM6 26h24v2H6zM7 29h2v3H7zM12 29h2v3h-2zM17 29h2v3h-2zM22 29h2v3h-2zM27 29h2v3h-2z" fill="#111"/>',
  graph: tile('#ffc61c') + '<path d="M6 26c4-6 4-10 6-8s-2 10 2 8 4-14 7-14-4 14 0 13 5-17 9-19" fill="none" stroke="#8a4a00" stroke-width="3"/>',
  toggle: tile() + '<rect x="9" y="5" width="17" height="26" fill="#111"/><rect x="12" y="7" width="11" height="11" fill="#eee"/>',
  digits: tile(),
  knob: '<circle cx="18" cy="18" r="17" fill="#999" stroke="#444"/><circle cx="18" cy="18" r="12" fill="#222"/><path d="M26 10l8 8-8 8z" fill="#222"/>',
  list: tile() + '<path d="M6 9h24v5H6zM6 17h24v5H6zM6 25h24v5H6z" fill="#ddd" stroke="#222" stroke-width="1.300"/>',
  pink: '<rect x="1" y="1" width="34" height="34" rx="3" fill="url(#gPink)" stroke="#333" stroke-width="1.500"/><path d="M2 24h32" stroke="#111" stroke-width="1.600"/><circle cx="4" cy="24" r="2.600" fill="#fff" stroke="#111"/><circle cx="24" cy="24" r="3" fill="#fff" stroke="#111"/>',
  pixels: '<rect x="1" y="1" width="34" height="34" rx="3" fill="#3ecb1a" stroke="#222" stroke-width="1.500"/><path d="M2 2h8v7H2zM18 2h8v7h-8zM26 17h8v8h-8z" fill="#b6f04a"/><path d="M10 9h8v8h-8zM2 17h8v8H2zM18 17h8v8h-8z" fill="#0b7a10"/><path d="M26 25h8v9h-8z" fill="#5ff0d0"/>',
  rlay: hexBase + '<path d="M9 20l3 8 8 2 8-8-1-6z" fill="#2f5fd8"/><path d="M9 14l3 9 8 3 7-8z" fill="#fff"/><path d="M8 9l3 10 7 3 9-9z" fill="#f0563a"/>',
  hatch: '<path d="M1 18L9.500 2h17L35 18l-8.500 16h-17z" fill="url(#pHatch)" stroke="#000" stroke-width="1.200"/>',
  swirl: hexBase + '<path d="M18 18c3-3 6 3 1 5s-10-4-5-10 15-1 14 7-11 11-17 6" fill="none" stroke="#c87a1c" stroke-width="2.200"/>',
  dash: hexBase + '<path d="M9 8h18" stroke="#ddd" stroke-width="2" stroke-dasharray="5 2"/><path d="M6 14h24" stroke="#ccc" stroke-width="2"/><path d="M5 20h26" stroke="#f2b11c" stroke-width="2.400" stroke-dasharray="4 2"/><path d="M9 27h18" stroke="#ddd" stroke-width="2.400" stroke-dasharray="3 2"/>',
  cherry: '<path d="M10 23C12 14 14 9 18 5c3 7 5 12 7 18" fill="none" stroke="#3a7a1a" stroke-width="1.600"/><path d="M18 5C12 2 7 6 9 12c5 1 8-2 9-7z" fill="#4fae1f"/><circle cx="9" cy="24" r="6.500" fill="url(#gCherry)"/><circle cx="25" cy="28" r="6.500" fill="url(#gCherry)"/>',
  arrowD: '<path d="M3 12h13V5l16 13-16 13v-7H3z" fill="#444" stroke="#222" stroke-width="1.500"/>',
  arrowL: '<path d="M3 12h13V5l16 13-16 13v-7H3z" fill="#eee" stroke="#777" stroke-width="1.500"/>',
  pill: '<ellipse cx="14" cy="15" rx="8" ry="12" transform="rotate(25 14 15)" fill="#ccc" stroke="#666"/><ellipse cx="14" cy="14" rx="3" ry="5" transform="rotate(25 14 15)" fill="#fff"/><ellipse cx="24" cy="23" rx="7.500" ry="11" transform="rotate(30 24 22)" fill="#d61c6a" stroke="#745"/><ellipse cx="25" cy="21" rx="3" ry="5" transform="rotate(30 25 21)" fill="#ff9cc8"/>',
  tree: '<rect x="1" y="1" width="34" height="34" rx="3" fill="url(#gTile)" stroke="#111" stroke-width="1.500"/><path d="M2 31h32v4H2z" fill="#111"/><path d="M18 31V19M18 24l-8-7M18 22l9-8M18 19l-3-9M18 19l4-12M12 18l-7-1M24 17l6 1M14 14l-7-4M22 14l7-5M16 11l-4-5M21 10l5-4" stroke="#111" stroke-width="2"/>',
  flask: '<path d="M14 2h8v11l7 17c1 3-1 4-3 4H10c-2 0-4-1-3-4l7-17z" fill="#f3e6ec" stroke="#8a2a50" stroke-width="1.500"/><path d="M11 20h14l4 10c1 3-1 4-3 4H10c-2 0-4-1-3-4z" fill="#e0246e"/>',
}
const glyphText = { num: '0.1', seven: '7', alpha: 'A' }
const ribbon = [
  { name: 'Geometry', w: 289, lw: 65, groups: [[['x'], ['vec']], [['circ', 'spiral', 'plane'], ['arc', 'line', 'diamond']], [['box', 'mesh'], ['cyl', 'surf']]] },
  { name: 'Primitive', w: 91, lw: 58, groups: [[['bool', 'num'], ['seven', 'alpha']]] },
  { name: 'Input', w: 205, lw: 36, groups: [[['press'], ['graph']], [['toggle', 'digits'], ['knob', 'list']], [['pink'], ['pixels']]] },
  { name: 'Rhino', w: 106, lw: 40, groups: [[['rlay'], ['swirl']], [['hatch'], ['dash']]] },
  { name: 'Util', w: 163, lw: 22, groups: [[['cherry'], ['tree']], [['arrowD'], ['arrowL']], [['pill'], ['flask']]] },
]
</script>

<template>
  <div class="app">
    <svg class="defs" width="0" height="0">
      <defs>
        <linearGradient id="gWhite" x1="0" y1="0" x2="1" y2="1"><stop offset="0" stop-color="#fff" /><stop offset="1" stop-color="#cfd2d4" /></linearGradient>
        <linearGradient id="gGold" x1="0" y1="0" x2="0" y2="1"><stop offset="0" stop-color="#ffe08a" /><stop offset="1" stop-color="#f0a61c" /></linearGradient>
        <linearGradient id="gGrey" x1="0" y1="0" x2="1" y2="0"><stop offset="0" stop-color="#efefef" /><stop offset="1" stop-color="#7c7c7c" /></linearGradient>
        <radialGradient id="gSphere" cx=".35" cy=".3" r=".8"><stop offset="0" stop-color="#fff" /><stop offset="1" stop-color="#8d8d8d" /></radialGradient>
        <radialGradient id="gBlueBall" cx=".35" cy=".25" r=".8"><stop offset="0" stop-color="#9fc2ff" /><stop offset=".4" stop-color="#1e46d0" /><stop offset="1" stop-color="#051055" /></radialGradient>
        <radialGradient id="gGreenBall" cx=".6" cy=".5" r=".6"><stop offset="0" stop-color="#b8f08a" /><stop offset="1" stop-color="#2f8c14" /></radialGradient>
        <linearGradient id="gHelp" x1="0" y1="0" x2="0" y2="1"><stop offset="0" stop-color="#6c8cf0" /><stop offset="1" stop-color="#1b3192" /></linearGradient>
        <linearGradient id="gFire" x1="0" y1="1" x2="1" y2="0"><stop offset="0" stop-color="#ffb010" /><stop offset="1" stop-color="#ff3a10" /></linearGradient>
        <linearGradient id="gHex" x1="0" y1="0" x2="0" y2="1"><stop offset="0" stop-color="#4a4a4a" /><stop offset="1" stop-color="#161616" /></linearGradient>
        <linearGradient id="gTile" x1="0" y1="0" x2="0" y2="1"><stop offset="0" stop-color="#8a8a8a" /><stop offset="1" stop-color="#d5d5d5" /></linearGradient>
        <linearGradient id="gPink" x1="0" y1="0" x2="0" y2="1"><stop offset="0" stop-color="#ff9ad0" /><stop offset=".5" stop-color="#e0107a" /><stop offset="1" stop-color="#ff8ac8" /></linearGradient>
        <radialGradient id="gCherry" cx=".4" cy=".3" r=".7"><stop offset="0" stop-color="#ff8a7a" /><stop offset=".5" stop-color="#e01414" /><stop offset="1" stop-color="#8a0505" /></radialGradient>
        <linearGradient id="gNode" x1="0" y1="0" x2="0" y2="1"><stop offset="0" stop-color="#aeacba" /><stop offset="1" stop-color="#8b8998" /></linearGradient>
        <linearGradient id="gNodeL" x1="0" y1="0" x2="0" y2="1"><stop offset="0" stop-color="#e6e6e6" /><stop offset="1" stop-color="#c9c9c9" /></linearGradient>
        <linearGradient id="gBar" x1="0" y1="0" x2="0" y2="1"><stop offset="0" stop-color="#565656" /><stop offset="1" stop-color="#2c2c2c" /></linearGradient>
        <linearGradient id="gEdge" x1="0" y1="0" x2="0" y2="1"><stop offset="0" stop-color="#000" stop-opacity="0" /><stop offset=".5" stop-color="#000" stop-opacity=".08" /><stop offset=".8" stop-color="#000" stop-opacity=".24" /><stop offset="1" stop-color="#000" stop-opacity=".42" /></linearGradient>
        <pattern id="pHatch" width="7" height="7" patternUnits="userSpaceOnUse"><rect width="7" height="7" fill="#e59a1c" /><path d="M0 0l7 7M7 0L0 7" stroke="#222" stroke-width="1.500" /></pattern>
        <pattern id="pDiag" width="5" height="5" patternUnits="userSpaceOnUse"><path d="M-1 6L6-1M-1 1L1-1M4 6L6 4" stroke="#000" stroke-opacity=".1" stroke-width="1.300" /></pattern>
        <radialGradient id="gDial"><stop offset="0" stop-color="#fff" /><stop offset=".6" stop-color="#eee" /><stop offset="1" stop-color="#bbb" /></radialGradient>
      </defs>
    </svg>

    <section class="rhino">
      <header class="r-title">
        <svg class="r-logo" viewBox="0 0 32 32" v-html="ic.rhino" />
        <span v-fit="451">parametric_box.3dm (104 KB) - Rhinoceros 8 Commercial</span>
        <svg class="winctl" width="160" height="16" viewBox="0 0 160 16"><path d="M2 8h14" stroke="#999" /><path d="M70 5h9v9h-9zM73 5V2h9v9h-3M142 2l12 12M154 2l-12 12" fill="none" stroke="#444" stroke-width="1.300" /></svg>
      </header>
      <nav class="r-menu"><span v-for="m in rhinoMenu" :key="m[0]" v-fit="m[1]">{{ m[0] }}</span></nav>
      <div class="cmd">
        <div class="grip"><i /><i /><i /><i /></div>
        <div class="cmd-body">
          <div class="hist"><p><span v-fit="136">Command: _Save</span></p><p><span v-fit="745">File successfully saved as C:\Users\User\Documents\UCB\Graduate1\TDF\parametric_box.3dm.</span></p></div>
          <div class="prompt"><b v-fit="92">Command:</b></div>
        </div>
        <svg class="spin" width="18" height="22" viewBox="0 0 18 22"><rect x=".5" y=".5" width="17" height="21" fill="#eee" stroke="#999" /><path d="M0 11h18" stroke="#999" /><path d="M5 8l4-4 4 4zM5 14l4 4 4-4z" fill="#222" /></svg>
      </div>
      <div class="r-tabs">
        <span class="on"><span v-fit="71">Standard</span></span>
        <span v-for="t in rhinoTabs" :key="t[0]" v-fit="t[1]">{{ t[0] }}</span>
        <svg class="cog" viewBox="0 0 32 32" v-html="ic.cog" />
      </div>
      <div class="r-bar">
        <div class="grip"><i /><i /><i /><i /></div>
        <div v-for="(t, i) in toolbar" :key="i" class="cell">
          <div v-if="t === 'wheel'" class="wheel big" />
          <svg v-else viewBox="0 0 32 32" v-html="ic[t]" />
          <i v-if="flyout(i)" class="fly" />
        </div>
      </div>

      <div class="main">
        <aside class="left">
          <div class="panel pal">
            <div class="dots"><i /><i /><i /><i /></div>
            <div class="palgrid">
              <div v-for="(t, i) in palette" :key="i" class="cell"><svg viewBox="0 0 32 32" v-html="ic[t]" /><i v-if="!noFly.includes(i)" class="fly" /></div>
            </div>
          </div>
          <div class="panel snap">
            <div class="head"><span v-fit="53">OSnap</span><svg class="cog" viewBox="0 0 32 32" v-html="ic.cog" /></div>
            <div class="snaptabs"><div class="t on"><svg viewBox="0 0 32 32" v-html="ic.osnap" /></div><div class="t"><svg viewBox="0 0 32 32" v-html="ic.filter2" /></div></div>
            <div class="checks">
              <label v-for="s in snaps" :key="s[0]"><i /><span v-fit="s[1]">{{ s[0] }}</span></label>
              <label class="dis"><i /><span v-fit="57">Disable</span></label>
            </div>
          </div>
        </aside>

        <div class="center">
          <div class="views">
            <div class="vp">
              <svg viewBox="185 235 970 609">
                <rect x="185" y="235" width="970" height="609" fill="#9da3ab" />
                <path :d="gTop.minor" class="mi" /><path :d="gTop.major" class="ma" />
                <path d="M600.500 235V392" stroke="#3c7a45" stroke-width="1.200" />
                <g class="red">
                  <rect x="581" y="392" width="580" height="317" fill-opacity=".52" />
                  <rect x="600" y="411" width="570" height="279" fill-opacity=".3" />
                  <rect x="617" y="427" width="526" height="246" fill-opacity=".32" />
                </g>
                <path d="M1155 392H581V709H1155M1155 407H596V694H1155M1155 411H600.500V690H1155M617 427H1143V673H617z" fill="none" stroke="#b01218" stroke-width="1.200" />
                <path d="M578 667h44v45h-44zM583 667v45M589 667v45M594 667v45M600 667v45M606 667v45M611 667v45M617 667v45M578 673h44M578 678h44M578 684h44M578 690h44M578 695h44M578 701h44M578 706h44" fill="none" stroke="#a00" stroke-width="1.200" />
                <g class="ax"><path d="M240.500 745v44.500H285" /><text x="242" y="743">y</text><text x="288" y="791">x</text></g>
              </svg>
              <div class="vl"><b v-fit="33">Top</b><i /><em /></div>
            </div>
            <div class="vp">
              <svg viewBox="1161 235 971 609">
                <rect x="1161" y="235" width="971" height="609" fill="#9da3ab" />
                <g transform="translate(1160 230) scale(.625 .39541)" class="ns">
                  <path :d="pMinor" stroke="#858b94" stroke-opacity=".16" stroke-width="1" fill="none" />
                  <path :d="pMajor" stroke="#7f848c" stroke-opacity=".62" stroke-width="1.200" fill="none" />
                  <path d="M1160 896L1556 944" stroke="#4b9a4b" stroke-width="2" />
                  <polygon v-for="(f, i) in faces" :key="i" :points="f[0]" :class="['face', f[1]]" />
                  <path d="M750 852l33-12 40 5-20 16-42 0z" fill="#a00505" />
                </g>
                <g class="ax"><path d="M1215.500 745v45.500L1257 792.500M1215.500 790.500L1199 798" /><text x="1217" y="748">z</text><text x="1261" y="793">y</text><text x="1201" y="799">x</text></g>
              </svg>
              <div class="vl act"><b v-fit="97">Perspective</b><i /><em /></div>
            </div>
            <div class="vp">
              <svg viewBox="185 850 970 609">
                <rect x="185" y="850" width="970" height="609" fill="#9da3ab" />
                <path :d="gFront.minor" class="mi" /><path :d="gFront.major" class="ma" />
                <g class="red">
                  <rect x="670" y="840" width="500" height="314.500" fill-opacity=".5" />
                  <rect x="729" y="840" width="500" height="241" fill-opacity=".46" />
                </g>
                <path d="M670 840V1154.500H1160M729 840V1081H1160M591 1154.500H1160" fill="none" stroke="#b01418" stroke-width="1.600" />
                <path d="M670 1154.500h80" stroke="#5a0a0e" stroke-width="2" />
                <g class="ax"><path d="M239.500 1360v45.500H284" /><text x="242" y="1361">z</text><text x="288" y="1407">x</text></g>
              </svg>
              <div class="vl"><b v-fit="45">Front</b><i /><em /></div>
            </div>
            <div class="vp">
              <svg viewBox="1161 850 971 609">
                <rect x="1161" y="850" width="971" height="609" fill="#9da3ab" />
                <path :d="gRight.minor" class="mi" /><path :d="gRight.major" class="ma" />
                <g class="red">
                  <rect x="1556" y="901" width="423" height="276" fill-opacity=".5" />
                  <rect x="1581" y="901" width="374" height="245" fill-opacity=".42" />
                  <rect x="1528" y="882" width="481" height="84" fill-opacity=".5" />
                  <rect x="1550" y="898" width="436" height="68" fill-opacity=".45" />
                </g>
                <path d="M1528 882H2009V966H1528zM1550 966V898H1986V966M1556 1177V901H1979V1177M1581 898V1146H1955V898M1522 1177.500H2132" fill="none" stroke="#b01218" stroke-width="1.400" />
                <g class="ax"><path d="M1215.500 1360v45.500H1260" /><text x="1218" y="1361">z</text><text x="1263" y="1405">y</text></g>
              </svg>
              <div class="vl"><b v-fit="45">Right</b><i /><em /></div>
            </div>
          </div>
          <div class="vtabs"><span class="on"><span v-fit="90">Perspective</span></span><span v-fit="30">Top</span><span v-fit="42">Front</span><span v-fit="43">Right</span><svg width="14" height="14" viewBox="0 0 14 14"><path d="M5 1h4v4h4v4H9v4H5V9H1V5h4z" fill="#fff" stroke="#777" /></svg></div>
        </div>

        <aside class="right">
          <div class="head"><span v-fit="48">Layers</span><svg class="cog" viewBox="0 0 32 32" v-html="ic.cog" /></div>
          <div class="rbody">
            <div class="lay">
              <div class="ltools"><svg v-for="t in layerTools" :key="t" viewBox="0 0 32 32" v-html="ic[t]" /></div>
              <div class="search"><svg width="18" height="18" viewBox="0 0 18 18"><circle cx="7.500" cy="7.500" r="6" fill="none" stroke="#222" stroke-width="1.500" /><path d="M12 12l5 5" stroke="#222" stroke-width="1.500" /></svg><span v-fit="52">Search</span></div>
              <div class="th"><div class="c1"><span v-fit="40">Layer</span></div><div /><div /><div /><div /><div class="c6"><span v-fit="62">Material</span></div><div class="c7">Li</div></div>
              <div class="tr"><b v-fit="63">Default</b><svg width="22" height="16" viewBox="0 0 22 16"><path d="M2 9l5 5L20 1" fill="none" stroke="#222" stroke-width="2" /></svg><i class="sw" /><i class="ring" /><b class="co">Co</b></div>
              <div class="list" />
              <div class="hscroll"><i /></div>
            </div>
            <div class="side">
              <div class="s on"><svg viewBox="0 0 32 32" v-html="ic.layers" /></div>
              <div class="rest"><div class="wheel" /><svg viewBox="0 0 32 32" v-html="ic.monitor" /><svg viewBox="0 0 32 32" v-html="ic.helpwin" /></div>
            </div>
          </div>
        </aside>
      </div>

      <footer class="status">
        <i class="pi" />
        <span class="s1" v-fit="54">CPlane</span>
        <span class="s2" v-fit="182">x 33.583&nbsp; y -23.908&nbsp; z 0</span>
        <span class="s3" v-fit="88">Millimeters</span>
        <i class="bk" />
        <span class="s4" v-fit="57">Default</span>
        <span class="bt s5"><b v-fit="84">Grid Snap</b></span>
        <span class="s6" v-fit="47">Ortho</span>
        <span class="s7" v-fit="49">Planar</span>
        <span class="bt s8"><b v-fit="54">Osnap</b></span>
        <span class="s9" v-fit="88">SmartTrack</span>
        <span class="bt s10"><b v-fit="147">Gumball (CPlane)</b></span>
        <svg class="lk" width="14" height="20" viewBox="0 0 14 20"><path d="M3.500 9V4.500a3.500 3.500 0 0 1 7 0V9" fill="none" stroke="#888" stroke-width="1.500" /><rect x="1" y="8" width="12" height="11" rx="1" fill="#ddd" stroke="#888" /></svg>
        <span class="s11" v-fit="166">Auto CPlane (Object)</span>
        <span class="s12" v-fit="117">Record History</span>
        <span class="bt s13"><b v-fit="44">Filter</b></span>
        <span class="s14" v-fit="168">Memory use: 901 MB</span>
        <i class="pi pr" />
      </footer>

      <div class="task">
        <svg class="fire" width="36" height="42" viewBox="0 0 36 42"><path d="M9 12c8 3 15 8 15 17a12 11 0 0 1-24 0c0-4 2-7 5-9 0 3 1 4 3 5 2-4 3-8 1-13z" fill="#e8432e" /><path d="M12 24c5 3 6 6 4 9-2 2-6 2-7-1-1-2 1-3 1-3s1 2 2 1 0-3 0-6z" fill="#dcdcdd" /><circle cx="23" cy="12" r="11.500" fill="#c42b1c" /><text x="19" y="18" fill="#fff" font-size="16">1</text></svg>
        <div class="wf"><span v-fit="126">Wildfire update</span><small v-fit="37">Now</small></div>
        <svg class="win" width="36" height="36" viewBox="0 0 36 36"><path d="M0 0h17v17H0zM19 0h17v17H19zM0 19h17v17H0zM19 19h17v17H19z" fill="#1489e0" /><path d="M0 0h17v17H0z" fill="#35bff5" /></svg>
        <div class="tsearch"><svg width="22" height="24" viewBox="0 0 22 24"><circle cx="10" cy="9.500" r="7.500" fill="none" stroke="#222" stroke-width="2.400" /><path d="M15 15l6 7" stroke="#222" stroke-width="2.600" /></svg><span v-fit="62">Search</span>
          <svg class="dol" width="70" height="38" viewBox="0 0 70 38"><path d="M1 31C6 22 16 19 27 19h16c12 0 20 6 26 12-4 5-12 7-34 7S5 36 1 31z" fill="#25d5ea" /><path d="M12 32c8-8 36-9 46 0" fill="none" stroke="#b8f8ff" stroke-width="3" /><path d="M24 4c2-4 7-5 10-1 2 3 11 6 13 15 1 6-3 14-7 19H24c-3-8-1-17 2-24z" fill="#66688f" /><path d="M27 12c4 2 8 5 6 14-1 5-4 8-8 11-3-8-1-17 2-25z" fill="#cfd8ea" /><circle cx="36" cy="11" r="1.500" fill="#111" /><path d="M24 22l-8 12 9-2z" fill="#54557c" /></svg>
        </div>
        <svg class="ti" viewBox="0 0 36 36"><rect y="9" width="26" height="26" rx="2" fill="#2c2c2c" /><rect x="9" y="1" width="26" height="26" rx="2" fill="#fff" fill-opacity=".8" /></svg>
        <svg class="ti" viewBox="0 0 36 36"><path d="M9 1h12c4 0 5 2 6 6h-6c-4 0-5 3-7 10s-3 10-7 9c-6-1-8-3-5-12S5 1 9 1z" fill="#1c83e0" /><path d="M2 14c2-2 8-2 12 3-2 7-3 10-7 9-6-1-8-3-5-12z" fill="#f2c21c" /><path d="M27 35H15c-4 0-5-2-6-6h6c4 0 5-3 7-10s3-10 7-9c6 1 8 3 5 12s-3 13-7 13z" fill="#e8568a" /><path d="M22 19c2-7 3-10 7-9 6 1 8 3 5 12-4 0-8 0-12-3z" fill="#a456e8" /></svg>
        <svg class="ti" viewBox="0 0 36 36"><path fill-rule="evenodd" d="M17 1l9 3 7 7v13L19 35l-8-2-7-8V11zM18 11l-4 4v8l4 3 4-4v-8z" fill="#5a62d8" /><path d="M17 26l5-4 11-2v4L19 35l-8-4z" fill="#9a62d0" /><path d="M17 1l9 3 7 7v13l-8-2V14l-7-4z" fill="#4aa2ec" /></svg>
        <svg class="ti" viewBox="0 0 36 36"><path d="M0 3a2 2 0 0 1 2-2h10l4 5H0z" fill="#e0a010" /><rect y="5" width="36" height="30" rx="2" fill="#ffd04a" /><path d="M6 35V27a3 3 0 0 1 3-3h18a3 3 0 0 1 3 3v8z" fill="#1682d4" /><path d="M11 29.500h14" stroke="#0a4c86" stroke-width="2" /></svg>
        <svg class="ti" viewBox="0 0 36 36"><circle cx="18" cy="18" r="18" fill="#fbc116" /><path d="M18 18L2.400 9A18 18 0 0 1 33.600 9z" fill="#e33b2e" /><path d="M2.400 9A18 18 0 0 0 18 36l8-14-8-4z" fill="#229342" /><circle cx="18" cy="18" r="8.500" fill="#fff" /><circle cx="18" cy="18" r="6.800" fill="#2b77e8" /></svg>
        <div class="rt"><svg width="36" height="36" viewBox="0 0 32 32" v-html="ic.rhino" /><i /></div>
        <svg class="tray" width="356" height="36" viewBox="2034 1546 356 36" fill="none" stroke="#222" stroke-width="1.900">
          <path d="M2038 1568l8-8 8 8" /><path d="M2083 1561v6M2087 1557v14M2091 1560v8M2095 1553v22M2099 1558v11M2103 1561v6" stroke="#f2487f" stroke-width="2.200" />
          <rect x="2130" y="1555" width="23" height="18" rx="3" /><path d="M2134 1560h16M2134 1564h16M2137 1568.500h10" stroke-dasharray="2 2" />
          <rect x="2178" y="1555" width="22" height="18" rx="3" /><path d="M2178 1565h22M2189 1565v8" />
          <path d="M2291 1561c7-8 17-8 24 0M2295 1565.500c5-5 11-5 16 0M2299 1569c3-2.500 5-2.500 8 0" /><circle cx="2303" cy="1572" r="1.500" />
          <path d="M2328 1560h4l5-4v17l-5-4h-4zM2342 1560l8 8M2350 1560l-8 8" /><rect x="2364" y="1557" width="20" height="14" rx="3" /><path d="M2368 1561h6v6h-6z" fill="#222" /><path d="M2386 1562v4M2367 1552l-3 7h5l-3 6" />
          <text x="2230" y="1569.500" textLength="34" font-size="16.500" fill="#222" stroke="none" lengthAdjust="spacingAndGlyphs">ENG</text>
        </svg>
        <div class="clock"><span v-fit="65">1:45 AM</span><span v-fit="82">9/12/2024</span></div>
        <svg class="bell" width="20" height="24" viewBox="0 0 20 24"><path d="M10 1c5 0 8 4 8 8v6l2 3v1H0v-1l2-3V9c0-4 3-8 8-8zM6 20.500h8c-1 3.500-7 3.500-8 0z" fill="#0a3f94" /></svg>
      </div>
    </section>

    <section class="gh">
      <header class="g-title"><span v-fit="240">Grasshopper - parametric_box</span>
        <svg class="gctl" width="156" height="18" viewBox="3655 1607 156 18" fill="none" stroke="#111" stroke-width="1.300"><path d="M3656 1616.500h15" /><rect x="3725.500" y="1612" width="11" height="11" rx="2" /><path d="M3728 1609.500h9a2.500 2.500 0 0 1 2.500 2.500v9M3796 1609l15 15M3811 1609l-15 15" /></svg>
      </header>
      <nav class="g-menu"><span v-for="m in ghMenu" :key="m[0]" v-fit="m[1]">{{ m[0] }}</span><span class="fn" v-fit="121">parametric_box</span></nav>
      <div class="g-tabs"><span class="on"><span v-fit="58">Params</span></span><span v-for="t in ghTabs" :key="t[0]" v-fit="t[1]">{{ t[0] }}</span></div>
      <div class="ribbon">
        <div v-for="r in ribbon" :key="r.name" class="rp" :style="{ width: r.w + 'px' }">
          <div class="rg">
            <div v-for="(g, k) in r.groups" :key="k" class="grp">
              <div v-for="(row, ri) in g" :key="ri" class="rr">
                <div v-for="n in row" :key="n" class="gic">
                  <svg width="36" height="36" viewBox="0 0 36 36" v-html="gi[n]" />
                  <b v-if="glyphText[n]" class="gt" :class="n">{{ glyphText[n] }}</b>
                  <b v-if="n === 'digits'" class="gt dg">4<br>5</b>
                </div>
              </div>
            </div>
          </div>
          <div class="rl"><span v-fit="r.lw">{{ r.name }}</span><svg width="10" height="12" viewBox="0 0 10 12"><path d="M5 1v9M1 5l4 6 4-6z" fill="#999" stroke="#999" /></svg></div>
        </div>
      </div>
      <div class="g-bar">
        <svg width="30" height="34" viewBox="0 0 30 34"><path d="M6 14V3l4-2h12l3 3v14z" fill="#eee" stroke="#555" stroke-width="1.300" /><path d="M1 16h10l3-4h15v21H1z" fill="#6cc22c" stroke="#2c6c10" stroke-width="1.500" /></svg>
        <svg class="b2" width="33" height="34" viewBox="0 0 33 34"><path d="M1 1h31v32H5l-4-4z" fill="#2f63d8" stroke="#112f7a" stroke-width="1.500" /><path d="M6 1h21v15H6z" fill="#eef3f8" /><path d="M10 5h13M10 9h13" stroke="#bbb" /><path d="M8 20h16v13H8z" fill="#ccc" /><path d="M10 22h6v9h-6z" fill="#1d46a8" /></svg>
        <i class="vs" />
        <div class="combo"><span v-fit="34">92%</span><svg width="12" height="8" viewBox="0 0 12 8"><path d="M1 1l5 5 5-5" fill="none" stroke="#555" /></svg></div>
        <svg class="b3" width="34" height="34" viewBox="0 0 34 34"><path d="M12 3H3v9M22 3h9v9M12 31H3v-9M22 31h9v-9" fill="none" stroke="#222" stroke-width="5" /><path d="M13.500 13.500l7 7M20.500 13.500l-7 7" stroke="#222" stroke-width="2.500" /></svg>
        <i class="tri" />
        <svg class="b4" width="34" height="24" viewBox="0 0 34 24"><path d="M1 12C8-1 26-1 33 12 26 25 8 25 1 12z" fill="#fff" stroke="#333" stroke-width="2" /><circle cx="17" cy="12" r="9.500" fill="#3ea6e0" stroke="#14507a" /><circle cx="17" cy="12" r="4" fill="#0a2a48" /><circle cx="14" cy="8" r="2" fill="#fff" /></svg>
        <i class="tri" />
        <svg class="b5" width="34" height="34" viewBox="0 0 34 34"><path d="M32 2c1 10-3 20-12 24l-5-8C18 12 24 5 32 2z" fill="#e02a1c" /><path d="M15 18l5 8-7 2z" fill="#e8c060" /><path d="M13 28c-4 8-14 5-10-2 2-5 10-7 7-16" fill="none" stroke="#6a1a10" stroke-width="2.400" /></svg>
        <svg class="disp" width="316" height="44" viewBox="3522 1848 316 44">
          <ellipse cx="3540" cy="1878" rx="13" ry="8" fill="#333" /><path d="M3527 1868l6-10 8-3 10 6-1 8-9 9-9-2z" fill="#ccc" stroke="#777" /><ellipse cx="3543" cy="1862" rx="5" ry="4" fill="#eee" stroke="#888" />
          <path d="M3565 1869l15-13 8-1 10 10-2 7-15 14-9-2z" fill="#f4f4f4" stroke="#333" stroke-width="1.300" /><ellipse cx="3588" cy="1864" rx="8" ry="6" fill="none" stroke="#444" transform="rotate(40 3588 1864)" /><ellipse cx="3574" cy="1876" rx="8" ry="6" fill="none" stroke="#888" transform="rotate(40 3574 1876)" />
          <rect x="3602.500" y="1850.500" width="39" height="41" fill="#fff" stroke="#1874cf" /><path d="M3605 1869l15-13 8-1 10 10-2 7-15 14-9-2z" fill="#c01208" stroke="#500" stroke-width="1.300" /><ellipse cx="3629" cy="1864" rx="8" ry="6" fill="#7a0803" transform="rotate(40 3629 1864)" />
          <path d="M3651.500 1854v34M3782.500 1854v34" stroke="#bbb" />
          <path d="M3675 1857l11-3 8 11-2 6-14 14-8-6 6-8z" fill="#15a5a0" stroke="#044" stroke-width="1.300" /><ellipse cx="3685" cy="1863" rx="7" ry="5" fill="#067" transform="rotate(40 3685 1863)" /><path d="M3663 1855l12 6M3672 1882l18 4" fill="none" stroke="#333" stroke-width="1.500" />
          <path d="M3701 1871l8-7 14 15-6 8-11-2z" fill="#ddd" stroke="#555" /><path d="M3709 1864l8-9 9 0 8 10-2 7-9 7z" fill="#6cb51c" stroke="#241" stroke-width="1.300" /><path d="M3703 1859l26 26" stroke="#222" stroke-width="1.500" />
          <circle cx="3758" cy="1869" r="15" fill="#ddd" stroke="#444" /><path d="M3758 1854a15 15 0 0 0 0 30z" fill="#e07a14" stroke="#723" />
          <path d="M3803 1857l10 4 4 10-4 9-10 4-9-4-4-9 4-10z" fill="#74b4f0" stroke="#1d3a8c" stroke-width="2" /><ellipse cx="3799" cy="1865" rx="4" ry="5" fill="#e0f0ff" /><path d="M3825 1870h7l-3.500 4z" fill="#111" />
        </svg>
      </div>
      <div class="canvas">
        <svg width="3840" height="771" viewBox="0 1894 3840 771" class="net">
          <rect y="1894" width="3840" height="771" fill="#d4cfc8" />
          <path d="M0 2665V1894" stroke="#666" stroke-width="4" />
          <g stroke="#b5b5ad" stroke-width="1.400"><path v-for="x in gv" :key="x" :d="`M${x} 1894V2665`" /><path v-for="y in ghh" :key="y" :d="`M0 ${y}H3840`" /></g>
          <rect y="1894" width="3840" height="69" fill="url(#pDiag)" /><rect y="1894" width="3840" height="69" fill="url(#gEdge)" />
          <path d="M0 1963.500H3840" stroke="#111" stroke-width="2" />
          <g class="sgroup"><rect v-for="s in sliders" :key="s.label" :x="s.x - 9" :y="s.y - 9" :width="s.w + 17.500" height="37" /><rect v-for="p in params" :key="p.label" :x="p.x - 10" :y="p.y - 9" width="65" height="37" /></g>
          <path v-for="(w, i) in wires" :key="i" :d="w" class="wire" />
          <g v-for="(n, i) in nodes" :key="i">
            <circle v-for="p in n.ins" :key="'i' + p[1]" :cx="n.x" :cy="p[1]" r="3.600" class="gripc" />
            <circle v-for="p in n.outs" :key="'o' + p[1]" :cx="n.x + n.w" :cy="p[1]" r="3.600" class="gripc" />
            <rect :x="n.x" :y="n.y" :width="n.w" :height="n.h" rx="3" :fill="n.light ? 'url(#gNodeL)' : 'url(#gNode)'" stroke="#2a2a2a" stroke-width="1.300" />
            <rect :x="n.x + 1.500" :y="n.y + 1.500" :width="n.w - 3" :height="n.h - 3" rx="2" fill="none" stroke="#fff" stroke-opacity=".3" />
            <rect :x="n.bar" :y="n.y + 2.500" width="23" :height="n.h - 5" rx="3" fill="url(#gBar)" stroke="#111" />
            <text class="nt" :transform="`translate(${n.bar + 16.500} ${n.y + n.h / 2 + TW[n.title] / 2}) rotate(-90)`" :textLength="TW[n.title]" lengthAdjust="spacingAndGlyphs">{{ n.title }}</text>
            <text v-for="p in n.ins" :key="'ti' + p[1]" class="np" :x="n.bar - 4.500 - W[p[0]]" :y="p[1] + 4" :textLength="W[p[0]]" lengthAdjust="spacingAndGlyphs">{{ p[0] }}</text>
            <text v-for="p in n.outs" :key="'to' + p[1]" class="np" :x="n.bar + 27" :y="p[1] + 4" :textLength="W[p[0]]" lengthAdjust="spacingAndGlyphs">{{ p[0] }}</text>
            <g v-if="n.flat" :transform="`translate(${n.x + 2.500} ${n.ins[0][1] - 6.500})`"><rect width="12" height="13" rx="2" fill="#eee" stroke="#333" /><path d="M6 2.500v7M3 6.500l3 3.500 3-3.500" fill="none" stroke="#222" stroke-width="1.300" /></g>
          </g>
          <g v-for="s in sliders" :key="s.label">
            <circle :cx="s.x + s.w" :cy="s.y + 9.500" r="3.600" class="gripc" />
            <rect :x="s.x" :y="s.y" :width="s.w" height="19" rx="2.500" fill="url(#gNodeL)" stroke="#333" stroke-width="1.400" />
            <path :d="`M${s.x + 1} ${s.y + 1}H${s.split}V${s.y + 18}H${s.x + 1}z`" fill="url(#gNode)" /><path :d="`M${s.split} ${s.y}v19`" stroke="#333" stroke-width="1.200" />
            <path :d="`M${s.split + 9} ${s.y + 9.500}H${s.x + s.w - 9}`" stroke="#b4b4b4" />
            <path :d="Array.from({ length: 6 }, (_, i) => `M${s.split + 9 + i * (s.x + s.w - s.split - 18) / 5} ${s.y + 5}v4.500`).join('')" stroke="#b4b4b4" />
            <text class="np" :x="s.x + 5.500" :y="s.y + 13.500" :textLength="s.lw" lengthAdjust="spacingAndGlyphs">{{ s.label }}</text>
            <text class="np" :x="s.vx" :y="s.y + 13.500" :textLength="s.vw" lengthAdjust="spacingAndGlyphs">{{ s.value }}</text>
            <path v-if="s.dia" :d="`M${s.knob} ${s.y + 6}l3.500 3.500-3.500 3.500-3.500-3.500z`" fill="#fff" stroke="#111" stroke-width="1.500" />
            <circle v-else :cx="s.knob" :cy="s.y + 9.500" r="3" fill="#fff" stroke="#111" stroke-width="2" />
          </g>
          <g v-for="p in params" :key="p.label">
            <circle :cx="p.x" :cy="p.y + 9.500" r="3.600" class="gripc" /><circle :cx="p.x + 46" :cy="p.y + 9.500" r="3.600" class="gripc" />
            <rect :x="p.x" :y="p.y" width="46" height="19" rx="3" fill="url(#gNodeL)" stroke="#333" stroke-width="1.300" />
            <text class="np" :x="p.x + 23 - p.w / 2" :y="p.y + 13.500" :textLength="p.w" lengthAdjust="spacingAndGlyphs">{{ p.label }}</text>
          </g>
          <g transform="translate(3792 2622)"><circle r="30" fill="none" stroke="#bdb8b0" stroke-width="1.500" /><circle r="25" fill="url(#gDial)" stroke="#666" stroke-width="2" /><circle r="28" fill="none" stroke="#999" stroke-width="3" stroke-dasharray="2 3" /><path d="M-30-12C-25-24-14-30-2-30" fill="none" stroke="#222" stroke-width="2" /><path d="M-40-6l12-8 2 14z" fill="#111" /></g>
        </svg>
        <div class="mini">
          <svg width="36" height="36" viewBox="0 0 36 36"><path d="M1 18L9.500 2h17L35 18l-8.500 16h-17z" fill="url(#gHex)" stroke="#000" /><circle cx="18" cy="18" r="9" fill="none" stroke="#ccc" stroke-width="2" /><circle cx="18" cy="18" r="3.500" fill="none" stroke="#ccc" stroke-width="2" /></svg><svg width="36" height="36" viewBox="0 0 36 36"><circle cx="21" cy="14" r="10" fill="#f0a020" stroke="#842" /><circle cx="12" cy="23" r="9" fill="#ffc850" stroke="#842" /></svg><svg width="36" height="36" viewBox="0 0 36 36" v-html="gi.spiral" /><svg width="36" height="36" viewBox="0 0 36 36"><path d="M5 8h8c1-5 9-5 10 0h8v9c-4 1-4 6 0 7v8h-9c-1-3-7-3-8 0H5v-8c4-2 3-7 0-8z" fill="#fff" stroke="#333" stroke-width="1.500" /></svg>
        </div>
      </div>
      <footer class="g-status"><span>...</span><span v-fit="68">1.0.0008</span></footer>
    </section>
  </div>
</template>

<style>
body { background: #fff; }
</style>

<style scoped>
.app { width: 3840px; height: 2700px; overflow: hidden; background: #fff; font-family: "Open Sans", "Noto Sans", sans-serif; font-size: 17px; color: #333; display: flex; flex-direction: column; position: relative; }
.app span, .app b, .app small { white-space: pre; flex: none; }
.defs { position: absolute; }
.rhino { width: 2560px; height: 1600px; background: #d7d8dc; display: flex; flex-direction: column; }
.r-title { height: 34px; background: #e9eaee; display: flex; align-items: center; padding-left: 2px; gap: 5px; padding-top: 1px; box-sizing: border-box; }
.r-logo { width: 24px; height: 24px; }
.winctl { margin-left: auto; margin-right: 25px; }
.r-menu { height: 30px; background: #e9eaee; display: flex; align-items: center; gap: 22.300px; padding: 0 0 2px 11px; box-sizing: border-box; }
.cmd { height: 81px; display: flex; margin-left: 3px; background: #e9eaee; position: relative; }
.grip { width: 17px; display: flex; flex-direction: column; align-items: center; justify-content: center; gap: 5px; }
.grip i, .dots i { width: 3px; height: 3px; border: 1px solid #b5b6ba; border-radius: 50%; }
.cmd-body { width: 2512px; background: #fff; color: #111; }
.hist { height: 52px; border-bottom: 1px solid #b9c0d8; }
.hist p { margin: 0; height: 25px; line-height: 25px; padding-left: 2px; }
.hist p:first-child { padding-top: 3px; height: 24px; line-height: 24px; }
.hist span, .prompt b { display: inline-block; }
.prompt { height: 28px; line-height: 27px; padding-left: 2px; }
.spin { align-self: flex-end; margin: 0 0 4px 5px; }
.r-tabs { height: 28px; margin-top: 4px; margin-left: 3px; display: flex; align-items: center; gap: 30.700px; color: #77787c; padding-right: 9px; }
.r-tabs .on { background: #e9eaee; color: #444; width: 117px; height: 28px; line-height: 29px; border-radius: 6px 8px 0 0; padding-left: 31px; box-sizing: border-box; margin-right: -14.500px; }
.r-tabs .on span, .vtabs .on span, .g-tabs .on span { display: inline-block; }
.cog { width: 18px; height: 18px; margin-left: auto; }
.r-bar { height: 52px; margin-left: 3px; margin-right: 3px; background: #e9eaee; display: flex; border-radius: 0 0 6px 6px; }
.r-bar .grip { width: 15px; padding-bottom: 14px; }
.cell { width: 42px; height: 42px; position: relative; display: flex; align-items: center; justify-content: center; flex: none; }
.cell svg { width: 31px; height: 31px; }
.fly { position: absolute; right: 0; bottom: 0; width: 9px; height: 9px; background: linear-gradient(135deg, transparent 50%, #7b7c80 50%); }
.wheel { width: 20px; height: 20px; border-radius: 50%; background: radial-gradient(circle, #e9eaee 36%, transparent 38%), conic-gradient(red, yellow, lime, cyan, blue, magenta, red); border: 1px solid #222; box-sizing: border-box; }
.wheel.big { width: 29px; height: 29px; }
.main { height: 1264px; display: flex; }
.left { width: 176px; margin: 3px 4px 0 3px; display: flex; flex-direction: column; gap: 4px; }
.panel { background: #e9eaee; border-radius: 6px 6px 0 0; }
.pal { height: 628px; }
.dots { height: 15px; border-bottom: 2px solid #d7d8dc; display: flex; justify-content: center; align-items: center; gap: 4px; }
.palgrid { display: grid; grid-template-columns: repeat(4, 42px); padding-left: 0; margin-top: -1px; }
.palgrid .cell svg { width: 29px; height: 29px; }
.snap { flex: 1; }
.head { height: 27px; display: flex; align-items: center; padding: 0 6px 0 7px; color: #77787c; border-bottom: 2px solid #d7d8dc; }
.snaptabs { height: 30px; display: flex; background: #d7d8dc; }
.snaptabs .t { width: 54px; display: flex; align-items: center; justify-content: center; }
.snaptabs .on { background: #e9eaee; border-radius: 0 6px 0 0; }
.snaptabs svg { width: 23px; height: 22px; }
.checks { padding: 6px 0 0 5px; display: flex; flex-direction: column; }
.checks label { height: 26px; display: flex; align-items: center; gap: 7px; }
.checks label span { margin-top: -1px; }
.checks label i { width: 18px; height: 17px; background: #fff; border: 2px solid #c0c6dc; }
.checks .dis { margin-top: 27px; }
.center { width: 1949px; margin-top: 5px; margin-left: 1px; display: flex; flex-direction: column; }
.views { display: grid; grid-template-columns: 972px 973px; grid-template-rows: 611px 611px; gap: 4px; }
.vp { position: relative; border: 1px solid #bac3de; box-sizing: border-box; overflow: hidden; }
.vp > svg { display: block; width: 100%; height: 100%; }
.mi { stroke: #8e949d; stroke-width: .8; fill: none; }
.ma { stroke: #80858d; stroke-width: 1.200; fill: none; }
.red rect { fill: #ff4c4e; }
.ax path { fill: none; stroke: #5c5e62; stroke-width: 1.200; }
.ax text { font-size: 19px; fill: #5c5e62; }
.ns * { vector-effect: non-scaling-stroke; }
.face { stroke: #a00000; stroke-width: 1.200; }
.face.f { fill: #ac0408; fill-opacity: .42; }
.face.d { fill: #880508; fill-opacity: .4; }
.face.m { fill: #9c0508; fill-opacity: .4; }
.vl { position: absolute; left: 0; top: 0; height: 26px; background: #d9dade; color: #606266; display: flex; align-items: center; padding-left: 10px; font-size: 17px; }
.vl i { width: 1px; height: 23px; background: #444; margin-left: 7px; }
.vl em { border: 6px solid transparent; border-top: 7px solid #444; border-bottom: 0; margin: 0 3px 0 2px; }
.vl.act { background: #6ba1ff; color: #2b2b2b; }
.vtabs { flex: 1; display: flex; align-items: center; gap: 24.500px; color: #77787c; }
.vtabs .on { width: 115px; height: 32px; line-height: 33px; box-sizing: border-box; padding-left: 15px; background: #e9eaee; border: 1px solid #bac3de; border-top: 0; border-radius: 0 0 6px 6px; color: #333; align-self: flex-start; margin-right: -11px; margin-left: -2px; }
.vtabs svg { margin-left: -1px; }
.right { width: 420px; margin: 3px 0 0 4px; display: flex; flex-direction: column; }
.right .head { background: #e9eaee; border-radius: 6px 6px 0 0; }
.rbody { flex: 1; display: flex; background: #e9eaee; }
.lay { width: 384px; display: flex; flex-direction: column; }
.ltools { height: 50px; display: flex; align-items: center; gap: 11px; padding-left: 5px; }
.ltools svg { width: 22px; height: 22px; }
.search { height: 31px; width: 379px; border: 2px solid #bfc6de; border-radius: 18px; background: #fff; display: flex; align-items: center; gap: 4px; color: #77787c; box-sizing: content-box; }
.search svg { margin-left: 6px; }
.th { margin-top: 8px; height: 35px; background: #fff; border-bottom: 2px solid #dcdfea; display: grid; grid-template-columns: 119px 30px 30px 30px 30px 120px 25px; line-height: 34px; }
.th > div { border-right: 1px solid #dcdfea; }
.th span { display: inline-block; }
.c1, .c6, .c7 { padding-left: 9px; }
.tr { height: 29px; background: #fff; border-bottom: 1px dashed #cfd0d6; display: flex; align-items: center; color: #222; padding-left: 27px; }
.tr svg { margin-left: 35px; margin-right: 68px; flex: none; }
.sw { width: 21px; height: 21px; background: #000; flex: none; }
.ring { width: 17px; height: 17px; border: 1.500px solid #777; border-radius: 50%; margin: 0 99px 0 8px; flex: none; }
.co { letter-spacing: -.8px; }
.list { flex: 1; background: #fff; }
.hscroll { height: 20px; background: #fff; }
.hscroll i { display: block; width: 164px; height: 12px; margin: 2px 0 0 11px; border-radius: 6px; background: #c1c1c1; }
.side { width: 36px; display: flex; flex-direction: column; }
.side .s { height: 54px; display: flex; align-items: center; justify-content: center; padding-left: 6px; }
.side svg { width: 20px; height: 20px; }
.rest { flex: 1; margin-left: 6px; border-radius: 6px 0 0 0; background: #d7d8dc; display: flex; flex-direction: column; align-items: center; gap: 33px; padding-top: 17px; }
.rest svg { width: 22px; height: 22px; }
.status { height: 33px; margin-right: 3px; background: #e9eaee; display: flex; align-items: center; padding-top: 1px; box-sizing: border-box; color: #5a5b5f; position: relative; }
.pi { width: 11px; height: 15px; border: 3px solid #444; border-left-width: 8px; box-sizing: content-box; margin-left: 10px; background: #fff; }
.pi.pr { border-left-width: 3px; border-right-width: 8px; margin-left: 279px; }
.s1 { margin-left: 30px; } .s2 { margin-left: 132px; } .s3 { margin-left: 131px; }
.bk { width: 24px; height: 24px; background: #000; margin-left: 37px; }
.s4 { margin-left: 10px; }
.bt { background: #cfd6ec; height: 28px; display: flex; align-items: center; border-radius: 3px; color: #222; padding: 0 11px; }
.s5 { margin-left: 191px; } .s6 { margin-left: 18px; } .s7 { margin-left: 30px; } .s8 { margin-left: 18px; } .s9 { margin-left: 20px; } .s10 { margin-left: 20px; }
.lk { margin-left: 15px; } .s11 { margin-left: 15px; } .s12 { margin-left: 37px; } .s13 { margin-left: 21px; } .s14 { margin-left: 20px; }
.task { margin-top: 2px; border-top: 2px solid #b2b2b5; height: 70px; background: linear-gradient(90deg, #dadadb 0%, #dadadc 22%, #dbd8e6 34%, #dbd8e6 66%, #dadadd 82%, #dadadb 100%); display: flex; align-items: center; box-sizing: content-box; flex: none; color: #222; }
.fire { margin-left: 35px; }
.wf { width: 126px; margin-left: 6px; display: flex; flex-direction: column; align-items: flex-start; line-height: 24px; margin-top: -4px; }
.wf small { font-size: 17px; color: #555; }
.win { margin-left: 694px; margin-top: -2px; }
.tsearch { margin-left: 20px; width: 324px; height: 44px; border: 1px solid #c3c1cc; border-bottom: 2px solid #aeacb8; border-radius: 23px; background: #f4f3f8; display: flex; align-items: center; color: #555; font-size: 18px; margin-top: -2px; }
.tsearch > svg { margin-left: 15px; margin-right: 16px; }
.tsearch .dol { margin-left: auto; margin-right: 5px; }
.ti { width: 36px; height: 36px; margin-left: 30px; margin-top: -2px; }
.tsearch + .ti { margin-left: 20px; }
.rt { width: 56px; height: 59px; margin-left: 20px; background: #efedf5; border-radius: 6px; display: flex; flex-direction: column; align-items: center; justify-content: space-between; padding-top: 10px; box-sizing: border-box; border: 1px solid #d5d2df; }
.rt i { width: 24px; height: 5px; border-radius: 3px; background: #0f78d4; }
.tray { margin-left: 359px; }
.clock { width: 84px; margin-left: 20px; display: flex; flex-direction: column; align-items: flex-end; line-height: 24px; margin-top: -4px; }
.bell { margin-left: 14px; margin-top: -4px; }
.gh { height: 1100px; background: #f0f0f0; display: flex; flex-direction: column; color: #111; }
.g-title { height: 34px; background: #f3f3f3; display: flex; align-items: center; padding-left: 4px; }
.gctl { margin-left: auto; margin-right: 29px; }
.g-menu { height: 45px; display: flex; align-items: center; gap: 28.500px; padding: 2px 14px 0 21px; box-sizing: border-box; background: linear-gradient(90deg, #f0f0f0, #fdfdfd 85%); }
.fn { margin-left: auto; }
.g-tabs { height: 33px; display: flex; align-items: center; gap: 26.700px; color: #707070; padding-top: 2px; box-sizing: border-box; }
.g-tabs .on { width: 84px; height: 34px; margin: 0 -14px -2px 1px; background: #fff; border: 1px solid #999; border-bottom: 0; border-radius: 8px 8px 0 0; color: #111; padding-left: 11px; box-sizing: border-box; line-height: 30px; }
.ribbon { height: 136px; box-sizing: border-box; border-top: 1px solid #999; border-right: 1px solid #bbb; border-radius: 0 10px 0 0; background: linear-gradient(#d5d5d5, #f0f0f0 85%); padding: 3px 0 0 4px; display: flex; gap: 5px; align-items: flex-start; }
.rp { border: 1px solid #888; border-radius: 6px; box-sizing: border-box; height: 108px; overflow: hidden; background: linear-gradient(#d8d8d8, #eee); display: flex; flex-direction: column; }
.rg { flex: 1; display: flex; padding: 2px 2px 0; }
.grp + .grp { border-left: 1px solid #c8c8c8; margin-left: 7px; padding-left: 7px; }
.grp { display: flex; flex-direction: column; }
.rr { display: flex; }
.gic { width: 42px; height: 42px; position: relative; display: flex; align-items: center; justify-content: center; }
.gt { position: absolute; color: #fff; font-family: "Liberation Serif", serif; font-size: 24px; line-height: 30px; }
.gt.num { font-size: 19px; }
.gt.dg { color: #444; font-size: 20px; line-height: 15px; font-family: "Liberation Sans", sans-serif; }
.rl { height: 20px; background: linear-gradient(#3a3a3a, #161616); color: #fff; font-size: 15.500px; display: flex; align-items: center; justify-content: center; position: relative; padding-right: 16px; }
.rl svg { position: absolute; right: 4px; top: 5px; }
.g-bar { height: 46px; box-sizing: border-box; border-top: 2px solid #777; background: linear-gradient(#fff, #f3f3f3); display: flex; align-items: center; padding: 0 0 2px 6px; }
.b2 { margin-left: 11px; }
.vs { width: 1px; height: 34px; background: #bbb; margin: 0 4px 0 9px; }
.combo { width: 223px; height: 32px; box-sizing: border-box; border: 1px solid #7a7a7a; background: #fff; display: flex; align-items: center; justify-content: space-between; padding: 0 7px 0 3px; }
.b3 { margin-left: 6px; }
.tri { border: 4px solid transparent; border-top: 5px solid #111; border-bottom: 0; margin: 2px 0 0 9px; }
.b4 { margin-left: 9px; }
.b5 { margin-left: 8px; }
.disp { margin-left: auto; margin-right: 2px; }
.canvas { height: 771px; position: relative; overflow: hidden; }
.net { display: block; }
.sgroup rect { fill: #b79fe8; fill-opacity: .9; stroke: #a594c4; stroke-width: 1; }
.wire { fill: none; stroke: #000; stroke-opacity: .6; stroke-width: 3.200; }
.gripc { fill: #fff; stroke: #111; stroke-width: 1.700; }
.nt { fill: #fff; font-weight: 700; font-size: 13.500px; }
.np { fill: #1a1a1a; font-size: 11px; }
.mini { position: absolute; left: 1px; bottom: 0; height: 41px; width: 178px; background: linear-gradient(#eee, #aaa); border: 1px solid #444; border-radius: 0 6px 0 0; box-sizing: border-box; display: flex; align-items: center; gap: 6px; padding-left: 4px; }
.g-status { height: 35px; display: flex; justify-content: space-between; padding: 8px 54px 0 8px; color: #777; box-sizing: border-box; }
</style>
